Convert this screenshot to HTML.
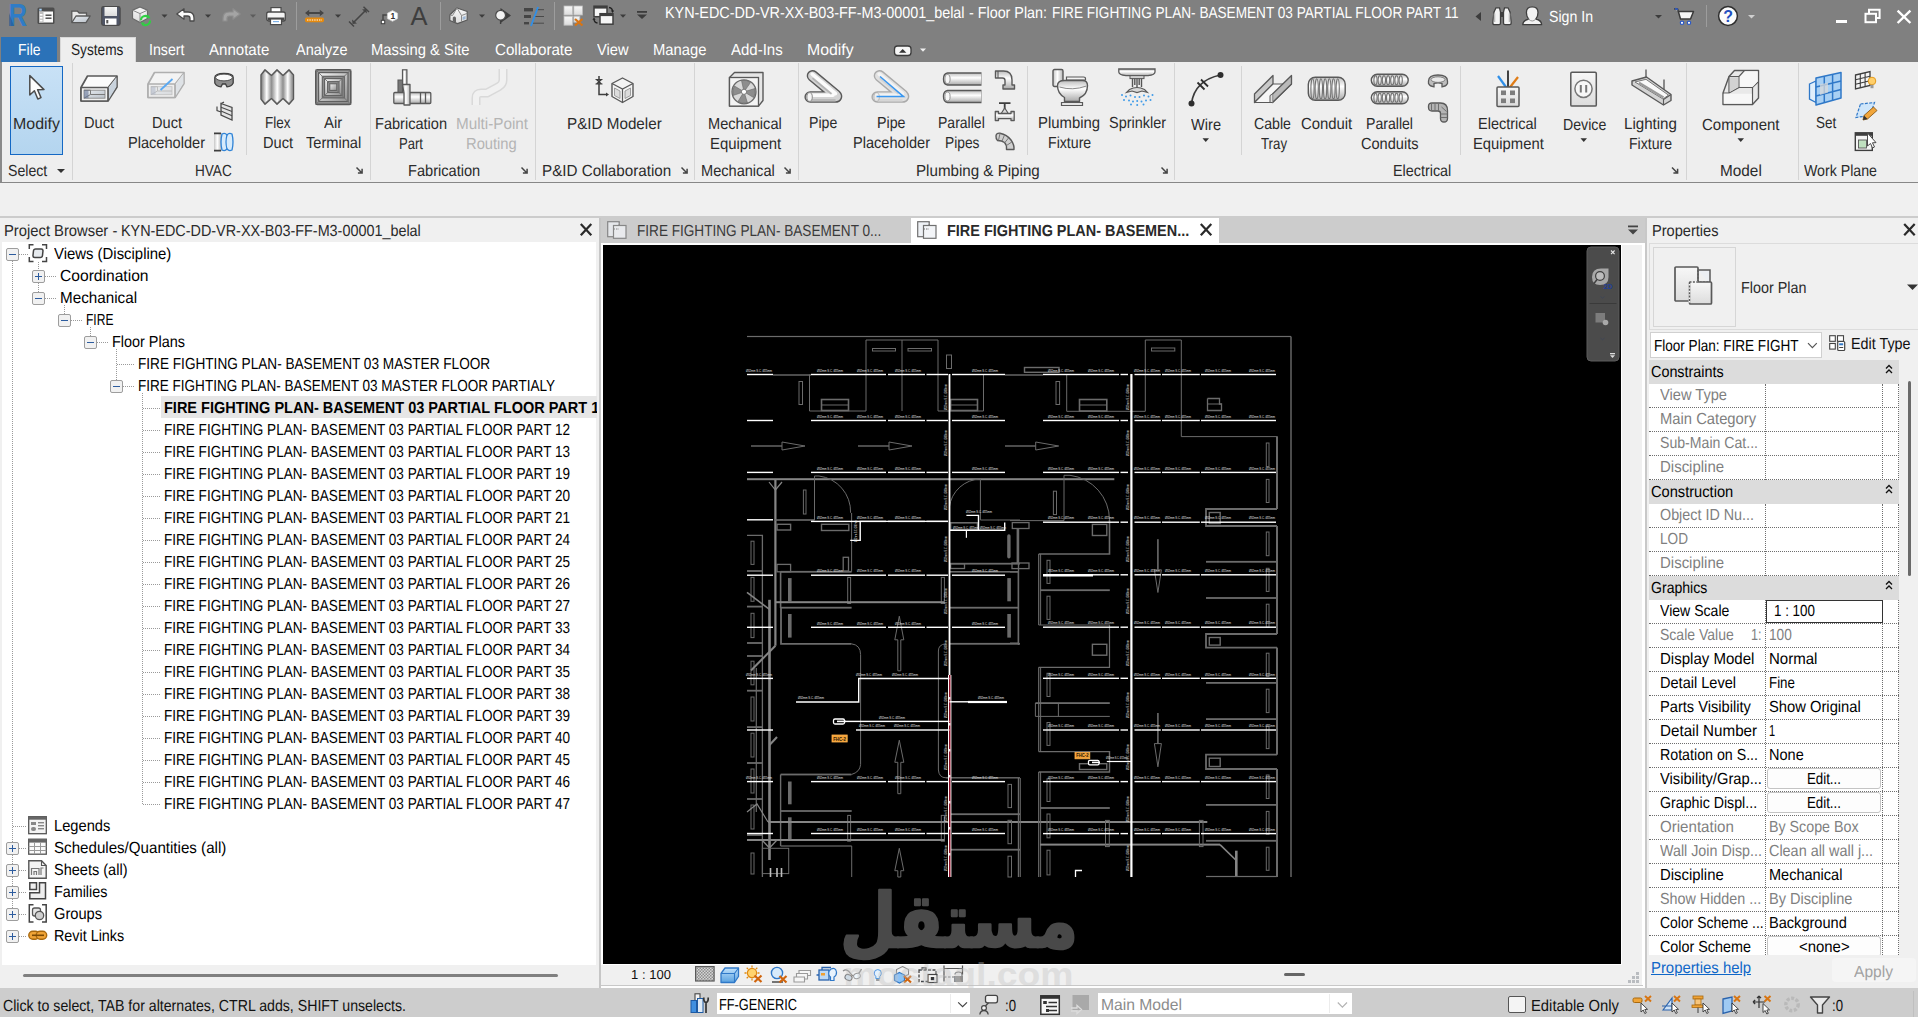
<!DOCTYPE html>
<html lang="en"><head><meta charset="utf-8"><title>Autodesk Revit</title><style>html,body{margin:0;padding:0;background:#f0f0f0;}
body{width:1918px;height:1017px;overflow:hidden;position:relative;font-family:"Liberation Sans",sans-serif;}
.t{position:absolute;white-space:pre;transform-origin:0 0;text-rendering:geometricPrecision;}
svg{overflow:visible}
</style></head><body>
<div style="position:absolute;left:0px;top:0px;width:1918px;height:1017px;background:#f0f0f0;"></div>
<div style="position:absolute;left:0px;top:0px;width:1918px;height:62px;background:#808080;"></div>
<div style="position:absolute;left:0px;top:62px;width:1918px;height:120px;background:#eeeeee;"></div>
<div style="position:absolute;left:0px;top:182px;width:1918px;height:1px;background:#878787;"></div>
<div style="position:absolute;left:0px;top:62px;width:2px;height:120px;background:#8a8a8a;"></div>
<div style="position:absolute;left:0px;top:216px;width:1918px;height:2px;background:#cccccc;"></div>
<span class="t" style="left:664.50px;top:5px;font-size:16px;line-height:17px;color:#fff;transform:scaleX(0.8983);">KYN-EDC-DD-VR-XX-B03-FF-M3-00001_belal</span>
<span class="t" style="left:969.30px;top:5px;font-size:16px;line-height:17px;color:#fff;transform:scaleX(0.8951);">- Floor Plan:</span>
<span class="t" style="left:1052.30px;top:5px;font-size:16px;line-height:17px;color:#fff;transform:scaleX(0.8502);">FIRE FIGHTING PLAN- BASEMENT 03 PARTIAL FLOOR PART 11</span>
<span class="t" style="left:1549.00px;top:9px;font-size:16px;line-height:17px;color:#fff;transform:scaleX(0.8833);">Sign In</span>
<div style="position:absolute;left:1px;top:37px;width:56px;height:25px;background:#2b72b8;"></div>
<div style="position:absolute;left:60px;top:37px;width:76px;height:25px;background:#eeeeee;border:1px solid #d8d8d8;border-bottom:none;box-sizing:border-box;"></div>
<span class="t" style="left:18.00px;top:42px;font-size:16px;line-height:17px;color:#fff;transform:scaleX(0.8727);">File</span>
<span class="t" style="left:71.30px;top:42px;font-size:16px;line-height:17px;color:#1e1e1e;transform:scaleX(0.8542);">Systems</span>
<span class="t" style="left:149.20px;top:42px;font-size:16px;line-height:17px;color:#fff;transform:scaleX(0.8872);">Insert</span>
<span class="t" style="left:209.20px;top:42px;font-size:16px;line-height:17px;color:#fff;transform:scaleX(0.9413);">Annotate</span>
<span class="t" style="left:295.50px;top:42px;font-size:16px;line-height:17px;color:#fff;transform:scaleX(0.9047);">Analyze</span>
<span class="t" style="left:371.00px;top:42px;font-size:16px;line-height:17px;color:#fff;transform:scaleX(0.9230);">Massing &amp; Site</span>
<span class="t" style="left:495.00px;top:42px;font-size:16px;line-height:17px;color:#fff;transform:scaleX(0.9471);">Collaborate</span>
<span class="t" style="left:597.00px;top:42px;font-size:16px;line-height:17px;color:#fff;transform:scaleX(0.9159);">View</span>
<span class="t" style="left:653.30px;top:42px;font-size:16px;line-height:17px;color:#fff;transform:scaleX(0.9234);">Manage</span>
<span class="t" style="left:731.00px;top:42px;font-size:16px;line-height:17px;color:#fff;transform:scaleX(0.9376);">Add-Ins</span>
<span class="t" style="left:806.70px;top:42px;font-size:16px;line-height:17px;color:#fff;transform:scaleX(0.9889);">Modify</span>
<div style="position:absolute;left:71.5px;top:63px;width:1px;height:117px;background:#d4d4d4;"></div>
<div style="position:absolute;left:369.5px;top:63px;width:1px;height:117px;background:#d4d4d4;"></div>
<div style="position:absolute;left:534.5px;top:63px;width:1px;height:117px;background:#d4d4d4;"></div>
<div style="position:absolute;left:693.5px;top:63px;width:1px;height:117px;background:#d4d4d4;"></div>
<div style="position:absolute;left:797.5px;top:63px;width:1px;height:117px;background:#d4d4d4;"></div>
<div style="position:absolute;left:1173.5px;top:63px;width:1px;height:117px;background:#d4d4d4;"></div>
<div style="position:absolute;left:1685.5px;top:63px;width:1px;height:117px;background:#d4d4d4;"></div>
<div style="position:absolute;left:1797.5px;top:63px;width:1px;height:117px;background:#d4d4d4;"></div>
<div style="position:absolute;left:246px;top:66px;width:1px;height:89px;background:#d4d4d4;"></div>
<div style="position:absolute;left:1027px;top:66px;width:1px;height:89px;background:#d4d4d4;"></div>
<div style="position:absolute;left:1241px;top:66px;width:1px;height:89px;background:#d4d4d4;"></div>
<div style="position:absolute;left:1460px;top:66px;width:1px;height:89px;background:#d4d4d4;"></div>
<div style="position:absolute;left:10px;top:66px;width:53px;height:89px;background:linear-gradient(#c8e1f6,#b4d5ef);border:1.3px solid #1468c4;box-sizing:border-box;"></div>
<span class="t" style="left:13.00px;top:116px;font-size:16px;line-height:17px;color:#2b2b2b;transform:scaleX(0.9973);">Modify</span>
<span class="t" style="left:83.75px;top:115px;font-size:16px;line-height:17px;color:#2b2b2b;transform:scaleX(0.9117);">Duct</span>
<span class="t" style="left:151.75px;top:115px;font-size:16px;line-height:17px;color:#2b2b2b;transform:scaleX(0.9117);">Duct</span>
<span class="t" style="left:127.50px;top:135px;font-size:16px;line-height:17px;color:#2b2b2b;transform:scaleX(0.9112);">Placeholder</span>
<span class="t" style="left:265.00px;top:115px;font-size:16px;line-height:17px;color:#2b2b2b;transform:scaleX(0.8434);">Flex</span>
<span class="t" style="left:262.50px;top:135px;font-size:16px;line-height:17px;color:#2b2b2b;transform:scaleX(0.9117);">Duct</span>
<span class="t" style="left:324.25px;top:115px;font-size:16px;line-height:17px;color:#2b2b2b;transform:scaleX(0.9329);">Air</span>
<span class="t" style="left:305.50px;top:135px;font-size:16px;line-height:17px;color:#2b2b2b;transform:scaleX(0.9137);">Terminal</span>
<span class="t" style="left:375.00px;top:116px;font-size:16px;line-height:17px;color:#2b2b2b;transform:scaleX(0.9096);">Fabrication</span>
<span class="t" style="left:399.25px;top:136px;font-size:16px;line-height:17px;color:#2b2b2b;transform:scaleX(0.8179);">Part</span>
<span class="t" style="left:455.50px;top:116px;font-size:16px;line-height:17px;color:#b4b4b4;transform:scaleX(0.9527);">Multi-Point</span>
<span class="t" style="left:466.25px;top:136px;font-size:16px;line-height:17px;color:#b4b4b4;transform:scaleX(0.9201);">Routing</span>
<span class="t" style="left:567.00px;top:116px;font-size:16px;line-height:17px;color:#2b2b2b;transform:scaleX(0.9514);">P&amp;ID Modeler</span>
<span class="t" style="left:708.25px;top:116px;font-size:16px;line-height:17px;color:#2b2b2b;transform:scaleX(0.9112);">Mechanical</span>
<span class="t" style="left:710.00px;top:136px;font-size:16px;line-height:17px;color:#2b2b2b;transform:scaleX(0.9314);">Equipment</span>
<span class="t" style="left:809.25px;top:115px;font-size:16px;line-height:17px;color:#2b2b2b;transform:scaleX(0.8820);">Pipe</span>
<span class="t" style="left:877.00px;top:115px;font-size:16px;line-height:17px;color:#2b2b2b;transform:scaleX(0.8898);">Pipe</span>
<span class="t" style="left:852.50px;top:135px;font-size:16px;line-height:17px;color:#2b2b2b;transform:scaleX(0.9112);">Placeholder</span>
<span class="t" style="left:938.25px;top:115px;font-size:16px;line-height:17px;color:#2b2b2b;transform:scaleX(0.8761);">Parallel</span>
<span class="t" style="left:945.00px;top:135px;font-size:16px;line-height:17px;color:#2b2b2b;transform:scaleX(0.8618);">Pipes</span>
<span class="t" style="left:1038.00px;top:115px;font-size:16px;line-height:17px;color:#2b2b2b;transform:scaleX(0.9295);">Plumbing</span>
<span class="t" style="left:1048.00px;top:135px;font-size:16px;line-height:17px;color:#2b2b2b;transform:scaleX(0.8843);">Fixture</span>
<span class="t" style="left:1109.25px;top:115px;font-size:16px;line-height:17px;color:#2b2b2b;transform:scaleX(0.9027);">Sprinkler</span>
<span class="t" style="left:1191.25px;top:117px;font-size:16px;line-height:17px;color:#2b2b2b;transform:scaleX(0.9121);">Wire</span>
<span class="t" style="left:1254.25px;top:116px;font-size:16px;line-height:17px;color:#2b2b2b;transform:scaleX(0.8849);">Cable</span>
<span class="t" style="left:1260.75px;top:136px;font-size:16px;line-height:17px;color:#2b2b2b;transform:scaleX(0.8279);">Tray</span>
<span class="t" style="left:1301.25px;top:116px;font-size:16px;line-height:17px;color:#2b2b2b;transform:scaleX(0.9292);">Conduit</span>
<span class="t" style="left:1366.25px;top:116px;font-size:16px;line-height:17px;color:#2b2b2b;transform:scaleX(0.8808);">Parallel</span>
<span class="t" style="left:1361.25px;top:136px;font-size:16px;line-height:17px;color:#2b2b2b;transform:scaleX(0.9104);">Conduits</span>
<span class="t" style="left:1478.25px;top:116px;font-size:16px;line-height:17px;color:#2b2b2b;transform:scaleX(0.9052);">Electrical</span>
<span class="t" style="left:1472.50px;top:136px;font-size:16px;line-height:17px;color:#2b2b2b;transform:scaleX(0.9248);">Equipment</span>
<span class="t" style="left:1562.50px;top:117px;font-size:16px;line-height:17px;color:#2b2b2b;transform:scaleX(0.8843);">Device</span>
<span class="t" style="left:1624.40px;top:116px;font-size:16px;line-height:17px;color:#2b2b2b;transform:scaleX(0.9439);">Lighting</span>
<span class="t" style="left:1629.40px;top:136px;font-size:16px;line-height:17px;color:#2b2b2b;transform:scaleX(0.8813);">Fixture</span>
<span class="t" style="left:1702.20px;top:117px;font-size:16px;line-height:17px;color:#2b2b2b;transform:scaleX(0.9369);">Component</span>
<span class="t" style="left:1815.60px;top:115px;font-size:16px;line-height:17px;color:#2b2b2b;transform:scaleX(0.8411);">Set</span>
<span class="t" style="left:8.25px;top:163px;font-size:16px;line-height:17px;color:#2b2b2b;transform:scaleX(0.8826);">Select</span>
<span class="t" style="left:194.50px;top:163px;font-size:16px;line-height:17px;color:#2b2b2b;transform:scaleX(0.8494);">HVAC</span>
<span class="t" style="left:408.25px;top:163px;font-size:16px;line-height:17px;color:#2b2b2b;transform:scaleX(0.9128);">Fabrication</span>
<span class="t" style="left:542.00px;top:163px;font-size:16px;line-height:17px;color:#2b2b2b;transform:scaleX(0.9498);">P&amp;ID Collaboration</span>
<span class="t" style="left:701.25px;top:163px;font-size:16px;line-height:17px;color:#2b2b2b;transform:scaleX(0.9112);">Mechanical</span>
<span class="t" style="left:916.25px;top:163px;font-size:16px;line-height:17px;color:#2b2b2b;transform:scaleX(0.9465);">Plumbing &amp; Piping</span>
<span class="t" style="left:1392.50px;top:163px;font-size:16px;line-height:17px;color:#2b2b2b;transform:scaleX(0.8974);">Electrical</span>
<span class="t" style="left:1720.40px;top:163px;font-size:16px;line-height:17px;color:#2b2b2b;transform:scaleX(0.9592);">Model</span>
<span class="t" style="left:1804.40px;top:163px;font-size:16px;line-height:17px;color:#2b2b2b;transform:scaleX(0.8859);">Work Plane</span>
<div style="position:absolute;left:0px;top:218px;width:599px;height:770px;background:#f0f0f0;"></div>
<div style="position:absolute;left:2px;top:242px;width:594px;height:723px;background:#fff;"></div>
<div style="position:absolute;left:599.2px;top:218px;width:1.8px;height:770px;background:#c6c6c6;"></div>
<span class="t" style="left:4.00px;top:223px;font-size:16px;line-height:17px;color:#2a2a2a;transform:scaleX(0.9234);">Project Browser -</span>
<span class="t" style="left:121.20px;top:223px;font-size:16px;line-height:17px;color:#2a2a2a;transform:scaleX(0.8992);">KYN-EDC-DD-VR-XX-B03-FF-M3-00001_belal</span>
<span class="t" style="left:54.00px;top:246px;font-size:16px;line-height:17px;color:#000;transform:scaleX(0.9312);">Views (Discipline)</span>
<span class="t" style="left:59.80px;top:268px;font-size:16px;line-height:17px;color:#000;transform:scaleX(0.9754);">Coordination</span>
<span class="t" style="left:60.20px;top:290px;font-size:16px;line-height:17px;color:#000;transform:scaleX(0.9526);">Mechanical</span>
<span class="t" style="left:86.25px;top:312px;font-size:16px;line-height:17px;color:#000;transform:scaleX(0.7530);">FIRE</span>
<span class="t" style="left:112.00px;top:334px;font-size:16px;line-height:17px;color:#000;transform:scaleX(0.9009);">Floor Plans</span>
<span class="t" style="left:138.00px;top:356px;font-size:16px;line-height:17px;color:#000;transform:scaleX(0.8507);">FIRE FIGHTING PLAN- BASEMENT 03 MASTER FLOOR</span>
<span class="t" style="left:138.00px;top:378px;font-size:16px;line-height:17px;color:#000;transform:scaleX(0.8456);">FIRE FIGHTING PLAN- BASEMENT 03 MASTER FLOOR PARTIALY</span>
<div style="position:absolute;left:161px;top:396px;width:436px;height:21.6px;background:#e6e6e6;"></div>
<div style="position:absolute;left:161px;top:396px;width:436px;height:21.6px;overflow:hidden">
<span class="t" style="left:3.00px;top:4px;font-size:16px;line-height:17px;color:#000;font-weight:700;transform:scaleX(0.9067);">FIRE FIGHTING PLAN- BASEMENT 03 PARTIAL FLOOR PART 11</span>
</div>
<span class="t" style="left:164.00px;top:422px;font-size:16px;line-height:17px;color:#000;transform:scaleX(0.8467);">FIRE FIGHTING PLAN- BASEMENT 03 PARTIAL FLOOR PART 12</span>
<span class="t" style="left:164.00px;top:444px;font-size:16px;line-height:17px;color:#000;transform:scaleX(0.8467);">FIRE FIGHTING PLAN- BASEMENT 03 PARTIAL FLOOR PART 13</span>
<span class="t" style="left:164.00px;top:466px;font-size:16px;line-height:17px;color:#000;transform:scaleX(0.8467);">FIRE FIGHTING PLAN- BASEMENT 03 PARTIAL FLOOR PART 19</span>
<span class="t" style="left:164.00px;top:488px;font-size:16px;line-height:17px;color:#000;transform:scaleX(0.8467);">FIRE FIGHTING PLAN- BASEMENT 03 PARTIAL FLOOR PART 20</span>
<span class="t" style="left:164.00px;top:510px;font-size:16px;line-height:17px;color:#000;transform:scaleX(0.8467);">FIRE FIGHTING PLAN- BASEMENT 03 PARTIAL FLOOR PART 21</span>
<span class="t" style="left:164.00px;top:532px;font-size:16px;line-height:17px;color:#000;transform:scaleX(0.8467);">FIRE FIGHTING PLAN- BASEMENT 03 PARTIAL FLOOR PART 24</span>
<span class="t" style="left:164.00px;top:554px;font-size:16px;line-height:17px;color:#000;transform:scaleX(0.8467);">FIRE FIGHTING PLAN- BASEMENT 03 PARTIAL FLOOR PART 25</span>
<span class="t" style="left:164.00px;top:576px;font-size:16px;line-height:17px;color:#000;transform:scaleX(0.8467);">FIRE FIGHTING PLAN- BASEMENT 03 PARTIAL FLOOR PART 26</span>
<span class="t" style="left:164.00px;top:598px;font-size:16px;line-height:17px;color:#000;transform:scaleX(0.8467);">FIRE FIGHTING PLAN- BASEMENT 03 PARTIAL FLOOR PART 27</span>
<span class="t" style="left:164.00px;top:620px;font-size:16px;line-height:17px;color:#000;transform:scaleX(0.8467);">FIRE FIGHTING PLAN- BASEMENT 03 PARTIAL FLOOR PART 33</span>
<span class="t" style="left:164.00px;top:642px;font-size:16px;line-height:17px;color:#000;transform:scaleX(0.8467);">FIRE FIGHTING PLAN- BASEMENT 03 PARTIAL FLOOR PART 34</span>
<span class="t" style="left:164.00px;top:664px;font-size:16px;line-height:17px;color:#000;transform:scaleX(0.8467);">FIRE FIGHTING PLAN- BASEMENT 03 PARTIAL FLOOR PART 35</span>
<span class="t" style="left:164.00px;top:686px;font-size:16px;line-height:17px;color:#000;transform:scaleX(0.8467);">FIRE FIGHTING PLAN- BASEMENT 03 PARTIAL FLOOR PART 38</span>
<span class="t" style="left:164.00px;top:708px;font-size:16px;line-height:17px;color:#000;transform:scaleX(0.8467);">FIRE FIGHTING PLAN- BASEMENT 03 PARTIAL FLOOR PART 39</span>
<span class="t" style="left:164.00px;top:730px;font-size:16px;line-height:17px;color:#000;transform:scaleX(0.8467);">FIRE FIGHTING PLAN- BASEMENT 03 PARTIAL FLOOR PART 40</span>
<span class="t" style="left:164.00px;top:752px;font-size:16px;line-height:17px;color:#000;transform:scaleX(0.8467);">FIRE FIGHTING PLAN- BASEMENT 03 PARTIAL FLOOR PART 45</span>
<span class="t" style="left:164.00px;top:774px;font-size:16px;line-height:17px;color:#000;transform:scaleX(0.8467);">FIRE FIGHTING PLAN- BASEMENT 03 PARTIAL FLOOR PART 46</span>
<span class="t" style="left:164.00px;top:796px;font-size:16px;line-height:17px;color:#000;transform:scaleX(0.8467);">FIRE FIGHTING PLAN- BASEMENT 03 PARTIAL FLOOR PART 47</span>
<span class="t" style="left:54.00px;top:818px;font-size:16px;line-height:17px;color:#000;transform:scaleX(0.9171);">Legends</span>
<span class="t" style="left:54.00px;top:840px;font-size:16px;line-height:17px;color:#000;transform:scaleX(0.9451);">Schedules/Quantities (all)</span>
<span class="t" style="left:54.00px;top:862px;font-size:16px;line-height:17px;color:#000;transform:scaleX(0.9083);">Sheets (all)</span>
<span class="t" style="left:54.00px;top:884px;font-size:16px;line-height:17px;color:#000;transform:scaleX(0.8965);">Families</span>
<span class="t" style="left:54.00px;top:906px;font-size:16px;line-height:17px;color:#000;transform:scaleX(0.9167);">Groups</span>
<span class="t" style="left:54.00px;top:928px;font-size:16px;line-height:17px;color:#000;transform:scaleX(0.8971);">Revit Links</span>
<div style="position:absolute;left:23px;top:974px;width:535px;height:3px;background:#808080;border-radius:2px;"></div>
<div style="position:absolute;left:0px;top:988px;width:1918px;height:29px;background:#cdcdcd;"></div>
<div style="position:absolute;left:1913px;top:991px;width:1px;height:26px;background:#bfbfbf;"></div>
<span class="t" style="left:3.00px;top:998px;font-size:16px;line-height:17px;color:#111;transform:scaleX(0.8846);">Click to select, TAB for alternates, CTRL adds, SHIFT unselects.</span>
<div style="position:absolute;left:717px;top:993px;width:253px;height:21px;background:#fff;"></div>
<span class="t" style="left:719.00px;top:997px;font-size:16px;line-height:17px;color:#000;transform:scaleX(0.7977);">FF-GENERIC</span>
<span class="t" style="left:1005.00px;top:998px;font-size:16px;line-height:17px;color:#111;transform:scaleX(0.8244);">:0</span>
<div style="position:absolute;left:1098px;top:993px;width:254px;height:21px;background:#fff;"></div>
<span class="t" style="left:1101.00px;top:997px;font-size:16px;line-height:17px;color:#8c8c8c;transform:scaleX(0.9794);">Main Model</span>
<div style="position:absolute;left:1508px;top:996px;width:18px;height:17px;background:#f4f4f4;border:1px solid #555;box-sizing:border-box;border-radius:2px;"></div>
<span class="t" style="left:1530.50px;top:998px;font-size:16px;line-height:17px;color:#111;transform:scaleX(0.9246);">Editable Only</span>
<span class="t" style="left:1832.00px;top:998px;font-size:16px;line-height:17px;color:#111;transform:scaleX(0.8244);">:0</span>
<div style="position:absolute;left:601px;top:218px;width:1044px;height:25px;background:#cccccc;"></div>
<div style="position:absolute;left:601px;top:242.5px;width:1044px;height:2.5px;background:#fff;"></div>
<div style="position:absolute;left:601px;top:245px;width:2px;height:743px;background:#fff;"></div>
<div style="position:absolute;left:603px;top:245px;width:1018px;height:719px;background:#000;"></div>
<div style="position:absolute;left:1621px;top:245px;width:1.3px;height:719px;background:#fff;"></div>
<div style="position:absolute;left:1622.3px;top:245px;width:19.7px;height:719px;background:#f0f0f0;"></div>
<div style="position:absolute;left:1642px;top:245px;width:3px;height:743px;background:#fff;"></div>
<div style="position:absolute;left:911px;top:218px;width:308px;height:27px;background:#fff;"></div>
<span class="t" style="left:636.60px;top:223px;font-size:16px;line-height:17px;color:#3a3a3a;transform:scaleX(0.8493);">FIRE FIGHTING PLAN- BASEMENT 0...</span>
<span class="t" style="left:946.80px;top:223px;font-size:16px;line-height:17px;color:#2a2a2a;font-weight:700;transform:scaleX(0.9022);">FIRE FIGHTING PLAN- BASEMEN...</span>
<div style="position:absolute;left:601px;top:964px;width:1041px;height:22px;background:#f0f0f0;"></div>
<div style="position:absolute;left:601px;top:964px;width:1021px;height:1px;background:#fff;"></div>
<div style="position:absolute;left:601px;top:985px;width:1042px;height:1px;background:#c8c8c8;"></div>
<div style="position:absolute;left:601px;top:986px;width:1044px;height:2px;background:#fdfdfd;"></div>
<span class="t" style="left:630.50px;top:966px;font-size:13px;line-height:17px;color:#111;transform:scaleX(1.0034);">1 : 100</span>
<div style="position:absolute;left:1284px;top:973px;width:21px;height:3px;background:#666;border-radius:2px;"></div>
<div style="position:absolute;left:1645px;top:218px;width:2px;height:770px;background:#c8c8c8;"></div>
<div style="position:absolute;left:1647px;top:218px;width:271px;height:770px;background:#f0f0f0;"></div>
<span class="t" style="left:1651.50px;top:223px;font-size:16px;line-height:17px;color:#2a2a2a;transform:scaleX(0.9119);">Properties</span>
<div style="position:absolute;left:1649px;top:243px;width:269px;height:87px;background:#f0f0f0;border:1px solid #dcdcdc;box-sizing:border-box;border-right:none;"></div>
<div style="position:absolute;left:1653px;top:247px;width:83px;height:80px;background:#f0f0f0;border:1px solid #d6d6d6;box-sizing:border-box;"></div>
<span class="t" style="left:1740.60px;top:280px;font-size:16px;line-height:17px;color:#2a2a2a;transform:scaleX(0.8969);">Floor Plan</span>
<div style="position:absolute;left:1650px;top:332px;width:172px;height:26px;background:#fff;border:1px solid #d0d0d0;box-sizing:border-box;"></div>
<span class="t" style="left:1653.50px;top:338px;font-size:16px;line-height:17px;color:#000;transform:scaleX(0.8465);">Floor Plan: FIRE FIGHT</span>
<span class="t" style="left:1850.50px;top:336px;font-size:16px;line-height:17px;color:#111;transform:scaleX(0.8958);">Edit Type</span>
<div style="position:absolute;left:1649px;top:360px;width:250px;height:595px;background:#fff;"></div>
<div style="position:absolute;left:1649px;top:360px;width:250px;height:24px;background:#dcdcdc;"></div>
<span class="t" style="left:1651.40px;top:364px;font-size:16px;line-height:17px;color:#000;transform:scaleX(0.8984);">Constraints</span>
<svg style="position:absolute;left:1885px;top:364px" width="8" height="11" viewBox="0 0 8 11"><path d="M1 4.5 L4 1.5 L7 4.5 M1 9 L4 6 L7 9" fill="none" stroke="#111" stroke-width="1.3"/></svg>
<div style="position:absolute;left:1649px;top:480px;width:250px;height:24px;background:#dcdcdc;"></div>
<span class="t" style="left:1651.40px;top:484px;font-size:16px;line-height:17px;color:#000;transform:scaleX(0.9151);">Construction</span>
<svg style="position:absolute;left:1885px;top:484px" width="8" height="11" viewBox="0 0 8 11"><path d="M1 4.5 L4 1.5 L7 4.5 M1 9 L4 6 L7 9" fill="none" stroke="#111" stroke-width="1.3"/></svg>
<div style="position:absolute;left:1649px;top:576px;width:250px;height:24px;background:#dcdcdc;"></div>
<span class="t" style="left:1651.40px;top:580px;font-size:16px;line-height:17px;color:#000;transform:scaleX(0.8793);">Graphics</span>
<svg style="position:absolute;left:1885px;top:580px" width="8" height="11" viewBox="0 0 8 11"><path d="M1 4.5 L4 1.5 L7 4.5 M1 9 L4 6 L7 9" fill="none" stroke="#111" stroke-width="1.3"/></svg>
<div style="position:absolute;left:1649px;top:407px;width:250px;height:0;border-top:1px dotted #6e6e6e"></div>
<div style="position:absolute;left:1649px;top:431px;width:250px;height:0;border-top:1px dotted #6e6e6e"></div>
<div style="position:absolute;left:1649px;top:455px;width:250px;height:0;border-top:1px dotted #6e6e6e"></div>
<div style="position:absolute;left:1649px;top:479px;width:250px;height:0;border-top:1px dotted #6e6e6e"></div>
<div style="position:absolute;left:1649px;top:527px;width:250px;height:0;border-top:1px dotted #6e6e6e"></div>
<div style="position:absolute;left:1649px;top:551px;width:250px;height:0;border-top:1px dotted #6e6e6e"></div>
<div style="position:absolute;left:1649px;top:575px;width:250px;height:0;border-top:1px dotted #6e6e6e"></div>
<div style="position:absolute;left:1649px;top:623px;width:250px;height:0;border-top:1px dotted #6e6e6e"></div>
<div style="position:absolute;left:1649px;top:647px;width:250px;height:0;border-top:1px dotted #6e6e6e"></div>
<div style="position:absolute;left:1649px;top:671px;width:250px;height:0;border-top:1px dotted #6e6e6e"></div>
<div style="position:absolute;left:1649px;top:695px;width:250px;height:0;border-top:1px dotted #6e6e6e"></div>
<div style="position:absolute;left:1649px;top:719px;width:250px;height:0;border-top:1px dotted #6e6e6e"></div>
<div style="position:absolute;left:1649px;top:743px;width:250px;height:0;border-top:1px dotted #6e6e6e"></div>
<div style="position:absolute;left:1649px;top:767px;width:250px;height:0;border-top:1px dotted #6e6e6e"></div>
<div style="position:absolute;left:1649px;top:791px;width:250px;height:0;border-top:1px dotted #6e6e6e"></div>
<div style="position:absolute;left:1649px;top:815px;width:250px;height:0;border-top:1px dotted #6e6e6e"></div>
<div style="position:absolute;left:1649px;top:839px;width:250px;height:0;border-top:1px dotted #6e6e6e"></div>
<div style="position:absolute;left:1649px;top:863px;width:250px;height:0;border-top:1px dotted #6e6e6e"></div>
<div style="position:absolute;left:1649px;top:887px;width:250px;height:0;border-top:1px dotted #6e6e6e"></div>
<div style="position:absolute;left:1649px;top:911px;width:250px;height:0;border-top:1px dotted #6e6e6e"></div>
<div style="position:absolute;left:1649px;top:935px;width:250px;height:0;border-top:1px dotted #6e6e6e"></div>
<div style="position:absolute;left:1765px;top:384px;width:0;height:96px;border-left:1px dotted #6e6e6e"></div>
<div style="position:absolute;left:1882px;top:384px;width:0;height:96px;border-left:1px dotted #6e6e6e"></div>
<div style="position:absolute;left:1898px;top:384px;width:0;height:96px;border-left:1px dotted #6e6e6e"></div>
<div style="position:absolute;left:1765px;top:504px;width:0;height:72px;border-left:1px dotted #6e6e6e"></div>
<div style="position:absolute;left:1882px;top:504px;width:0;height:72px;border-left:1px dotted #6e6e6e"></div>
<div style="position:absolute;left:1898px;top:504px;width:0;height:72px;border-left:1px dotted #6e6e6e"></div>
<div style="position:absolute;left:1765px;top:600px;width:0;height:355px;border-left:1px dotted #6e6e6e"></div>
<div style="position:absolute;left:1882px;top:600px;width:0;height:355px;border-left:1px dotted #6e6e6e"></div>
<div style="position:absolute;left:1898px;top:600px;width:0;height:355px;border-left:1px dotted #6e6e6e"></div>
<span class="t" style="left:1659.60px;top:387px;font-size:16px;line-height:17px;color:#7f7f7f;transform:scaleX(0.9149);">View Type</span>
<span class="t" style="left:1659.60px;top:411px;font-size:16px;line-height:17px;color:#7f7f7f;transform:scaleX(0.9236);">Main Category</span>
<span class="t" style="left:1659.60px;top:435px;font-size:16px;line-height:17px;color:#7f7f7f;transform:scaleX(0.8816);">Sub-Main Cat...</span>
<span class="t" style="left:1659.60px;top:459px;font-size:16px;line-height:17px;color:#7f7f7f;transform:scaleX(0.9362);">Discipline</span>
<span class="t" style="left:1659.60px;top:507px;font-size:16px;line-height:17px;color:#7f7f7f;transform:scaleX(0.8959);">Object ID Nu...</span>
<span class="t" style="left:1659.60px;top:531px;font-size:16px;line-height:17px;color:#7f7f7f;transform:scaleX(0.8509);">LOD</span>
<span class="t" style="left:1659.60px;top:555px;font-size:16px;line-height:17px;color:#7f7f7f;transform:scaleX(0.9362);">Discipline</span>
<div style="position:absolute;left:1766px;top:600px;width:117px;height:23px;background:#fff;border:1px solid #333;box-sizing:border-box;"></div>
<div style="position:absolute;left:1767px;top:768px;width:114px;height:21px;background:#fdfdfd;border:1px solid #c4c4c4;box-sizing:border-box;border-radius:3px;"></div>
<div style="position:absolute;left:1767px;top:792px;width:114px;height:21px;background:#fdfdfd;border:1px solid #c4c4c4;box-sizing:border-box;border-radius:3px;"></div>
<div style="position:absolute;left:1767px;top:936px;width:114px;height:21px;background:#fdfdfd;border:1px solid #c4c4c4;box-sizing:border-box;border-radius:3px;"></div>
<span class="t" style="left:1659.60px;top:603px;font-size:16px;line-height:17px;color:#000;transform:scaleX(0.8800);">View Scale</span>
<span class="t" style="left:1659.60px;top:627px;font-size:16px;line-height:17px;color:#7f7f7f;transform:scaleX(0.8765);">Scale Value</span>
<span class="t" style="left:1768.60px;top:627px;font-size:16px;line-height:17px;color:#7f7f7f;transform:scaleX(0.8538);">100</span>
<span class="t" style="left:1659.60px;top:651px;font-size:16px;line-height:17px;color:#000;transform:scaleX(0.9394);">Display Model</span>
<span class="t" style="left:1768.60px;top:651px;font-size:16px;line-height:17px;color:#000;transform:scaleX(0.9387);">Normal</span>
<span class="t" style="left:1659.60px;top:675px;font-size:16px;line-height:17px;color:#000;transform:scaleX(0.9090);">Detail Level</span>
<span class="t" style="left:1768.60px;top:675px;font-size:16px;line-height:17px;color:#000;transform:scaleX(0.8321);">Fine</span>
<span class="t" style="left:1659.60px;top:699px;font-size:16px;line-height:17px;color:#000;transform:scaleX(0.9154);">Parts Visibility</span>
<span class="t" style="left:1768.60px;top:699px;font-size:16px;line-height:17px;color:#000;transform:scaleX(0.9216);">Show Original</span>
<span class="t" style="left:1659.60px;top:723px;font-size:16px;line-height:17px;color:#000;transform:scaleX(0.9495);">Detail Number</span>
<span class="t" style="left:1768.60px;top:723px;font-size:16px;line-height:17px;color:#000;transform:scaleX(0.6849);">1</span>
<span class="t" style="left:1659.60px;top:747px;font-size:16px;line-height:17px;color:#000;transform:scaleX(0.8885);">Rotation on S...</span>
<span class="t" style="left:1768.60px;top:747px;font-size:16px;line-height:17px;color:#000;transform:scaleX(0.9072);">None</span>
<span class="t" style="left:1659.60px;top:771px;font-size:16px;line-height:17px;color:#000;transform:scaleX(0.9192);">Visibility/Grap...</span>
<span class="t" style="left:1659.60px;top:795px;font-size:16px;line-height:17px;color:#000;transform:scaleX(0.8878);">Graphic Displ...</span>
<span class="t" style="left:1659.60px;top:819px;font-size:16px;line-height:17px;color:#7f7f7f;transform:scaleX(0.9429);">Orientation</span>
<span class="t" style="left:1768.60px;top:819px;font-size:16px;line-height:17px;color:#7f7f7f;transform:scaleX(0.8915);">By Scope Box</span>
<span class="t" style="left:1659.60px;top:843px;font-size:16px;line-height:17px;color:#7f7f7f;transform:scaleX(0.8930);">Wall Join Disp...</span>
<span class="t" style="left:1768.60px;top:843px;font-size:16px;line-height:17px;color:#7f7f7f;transform:scaleX(0.9004);">Clean all wall j...</span>
<span class="t" style="left:1659.60px;top:867px;font-size:16px;line-height:17px;color:#000;transform:scaleX(0.9304);">Discipline</span>
<span class="t" style="left:1768.60px;top:867px;font-size:16px;line-height:17px;color:#000;transform:scaleX(0.9069);">Mechanical</span>
<span class="t" style="left:1659.60px;top:891px;font-size:16px;line-height:17px;color:#7f7f7f;transform:scaleX(0.8951);">Show Hidden ...</span>
<span class="t" style="left:1768.60px;top:891px;font-size:16px;line-height:17px;color:#7f7f7f;transform:scaleX(0.9105);">By Discipline</span>
<span class="t" style="left:1659.60px;top:915px;font-size:16px;line-height:17px;color:#000;transform:scaleX(0.8703);">Color Scheme ...</span>
<span class="t" style="left:1768.60px;top:915px;font-size:16px;line-height:17px;color:#000;transform:scaleX(0.9111);">Background</span>
<span class="t" style="left:1659.60px;top:939px;font-size:16px;line-height:17px;color:#000;transform:scaleX(0.8967);">Color Scheme</span>
<span class="t" style="left:1751.00px;top:627px;font-size:16px;line-height:17px;color:#7f7f7f;transform:scaleX(0.7869);">1:</span>
<span class="t" style="left:1773.80px;top:603px;font-size:16px;line-height:17px;color:#000;transform:scaleX(0.8358);">1 : 100</span>
<span class="t" style="left:1806.80px;top:771px;font-size:16px;line-height:17px;color:#000;transform:scaleX(0.8287);">Edit...</span>
<span class="t" style="left:1806.80px;top:795px;font-size:16px;line-height:17px;color:#000;transform:scaleX(0.8287);">Edit...</span>
<span class="t" style="left:1798.90px;top:939px;font-size:16px;line-height:17px;color:#000;transform:scaleX(0.9322);">&lt;none&gt;</span>
<div style="position:absolute;left:1647px;top:955px;width:271px;height:33px;background:#f0f0f0;"></div>
<div style="position:absolute;left:1908px;top:381px;width:3px;height:195px;background:#6a6a6a;border-radius:2px;"></div>
<span class="t" style="left:1651.00px;top:960px;font-size:16px;line-height:17px;color:#0f67c8;transform:scaleX(0.9292);text-decoration:underline;">Properties help</span>
<div style="position:absolute;left:1832px;top:958px;width:84px;height:24px;background:#f5f5f5;border-radius:4px;"></div>
<span class="t" style="left:1853.50px;top:964px;font-size:16px;line-height:17px;color:#a2a2a2;transform:scaleX(0.9742);">Apply</span>
<svg style="position:absolute;left:0;top:0" width="1918" height="1017" viewBox="0 0 1918 1017" font-family="Liberation Sans, sans-serif" shape-rendering="geometricPrecision"><rect x="747.0" y="335.9" width="544.0" height="1.2" fill="#6b6b6b"/><rect x="1290.3" y="336.5" width="1.4" height="540.5" fill="#6b6b6b"/><polyline points="809.5,374.5 809.5,411.0 866.0,411.0" fill="none" stroke="#6b6b6b" stroke-width="1" /><polyline points="866.0,411.0 866.0,340.0 938.0,340.0 938.0,411.0 983.5,411.0 983.5,374.5" fill="none" stroke="#6b6b6b" stroke-width="1" /><rect x="901.5" y="340.0" width="1" height="71.0" fill="#6b6b6b"/><rect x="773.0" y="374.3" width="38.0" height="1.4" fill="#6b6b6b"/><rect x="872.5" y="348.5" width="23.0" height="2.5" fill="none" stroke="#6b6b6b" stroke-width="1"/><rect x="908.0" y="348.5" width="23.5" height="2.5" fill="none" stroke="#6b6b6b" stroke-width="1"/><rect x="946.5" y="355.0" width="5.0" height="13.5" fill="none" stroke="#6b6b6b" stroke-width="1"/><rect x="799.0" y="381.5" width="3.5" height="23.0" fill="none" stroke="#6b6b6b" stroke-width="1"/><rect x="821.5" y="399.5" width="27.0" height="11.0" fill="none" stroke="#6b6b6b" stroke-width="1.6"/><rect x="821.5" y="404.5" width="27.0" height="1" fill="#6b6b6b"/><rect x="950.6" y="399.5" width="26.9" height="11.0" fill="none" stroke="#6b6b6b" stroke-width="1.6"/><rect x="950.6" y="404.5" width="26.9" height="1" fill="#6b6b6b"/><rect x="1005.0" y="374.3" width="38.0" height="1.4" fill="#6b6b6b"/><polyline points="1066.7,374.5 1066.7,411.3 1145.3,411.3 1145.3,340.0 1181.3,340.0 1181.3,436.6 1277.6,436.6" fill="none" stroke="#6b6b6b" stroke-width="1" /><rect x="1276.0" y="436.6" width="2" height="72.4" fill="#6b6b6b"/><rect x="1151.5" y="348.0" width="23.3" height="3.0" fill="none" stroke="#6b6b6b" stroke-width="1"/><rect x="1024.5" y="367.5" width="34.5" height="4.8" fill="none" stroke="#6b6b6b" stroke-width="1.4"/><rect x="1056.0" y="381.5" width="3.6" height="23.0" fill="none" stroke="#6b6b6b" stroke-width="1"/><rect x="1079.5" y="399.5" width="27.3" height="11.5" fill="none" stroke="#6b6b6b" stroke-width="1.6"/><rect x="1079.5" y="404.5" width="27.3" height="1" fill="#6b6b6b"/><polyline points="1207.5,398.5 1219.5,398.5 1219.5,404.0 1221.5,404.0 1221.5,410.5 1207.5,410.5 1207.5,398.5" fill="none" stroke="#6b6b6b" stroke-width="1.3" /><rect x="1207.5" y="403.5" width="14.0" height="1" fill="#6b6b6b"/><rect x="1266.3" y="443.0" width="2.7" height="23.5" fill="none" stroke="#6b6b6b" stroke-width="1"/><rect x="751.0" y="445.3" width="31.0" height="1.4" fill="#6b6b6b"/><polyline points="782.0,442.0 805.0,446.0 782.0,450.0 782.0,442.0" fill="none" stroke="#6b6b6b" stroke-width="1" /><rect x="858.0" y="445.3" width="31.0" height="1.4" fill="#6b6b6b"/><polyline points="889.0,442.0 912.0,446.0 889.0,450.0 889.0,442.0" fill="none" stroke="#6b6b6b" stroke-width="1" /><rect x="1005.0" y="445.3" width="30.7" height="1.4" fill="#6b6b6b"/><polyline points="1035.7,442.0 1058.7,446.0 1035.7,450.0 1035.7,442.0" fill="none" stroke="#6b6b6b" stroke-width="1" /><rect x="747.0" y="478.2" width="367.3" height="2" fill="#858585"/><rect x="774.3" y="479.0" width="2.2" height="166.7" fill="#858585"/><polyline points="769.0,482.0 775.4,490.0 782.0,482.0" fill="none" stroke="#858585" stroke-width="1.2" /><rect x="814.0" y="476.0" width="1" height="44.0" fill="#6b6b6b"/><path d="M814.5 476 L819 476 A 36 36 0 0 1 850.6 512.8" fill="none" stroke="#6b6b6b" stroke-width="1"/><rect x="775.0" y="519.2" width="39.5" height="1.6" fill="#6b6b6b"/><rect x="979.9" y="479.0" width="1" height="41.0" fill="#6b6b6b"/><path d="M980.4 479 A 32 32 0 0 0 949.4 507" fill="none" stroke="#6b6b6b" stroke-width="1"/><rect x="980.4" y="519.5" width="39.6" height="1" fill="#6b6b6b"/><rect x="1063.5" y="475.3" width="1" height="45.3" fill="#6b6b6b"/><path d="M1064 475.3 L1070 475.3 A 45 45 0 0 1 1109.5 520" fill="none" stroke="#6b6b6b" stroke-width="1"/><rect x="1010.0" y="520.1" width="54.0" height="1" fill="#6b6b6b"/><rect x="803.4" y="490.0" width="2.6" height="24.0" fill="none" stroke="#6b6b6b" stroke-width="1"/><rect x="1053.4" y="491.2" width="3.1" height="23.4" fill="none" stroke="#6b6b6b" stroke-width="1"/><rect x="777.0" y="524.3" width="13.6" height="5.7" fill="none" stroke="#6b6b6b" stroke-width="1.4"/><rect x="821.5" y="524.3" width="27.3" height="6.2" fill="none" stroke="#6b6b6b" stroke-width="1.4"/><rect x="851.1" y="513.0" width="1" height="58.8" fill="#6b6b6b"/><rect x="843.2" y="557.3" width="5.3" height="13.7" fill="none" stroke="#6b6b6b" stroke-width="1.3"/><rect x="780.6" y="570.9" width="71.0" height="1.8" fill="#6b6b6b"/><rect x="779.8" y="571.8" width="1.6" height="36.2" fill="#6b6b6b"/><rect x="777.0" y="564.4" width="13.6" height="7.4" fill="none" stroke="#6b6b6b" stroke-width="1.3"/><polyline points="747.0,535.3 762.4,535.3 762.4,877.0" fill="none" stroke="#6b6b6b" stroke-width="1.3" /><rect x="751.0" y="541.2" width="3.0" height="23.2" fill="none" stroke="#6b6b6b" stroke-width="1"/><rect x="751.0" y="577.4" width="3.0" height="23.9" fill="none" stroke="#6b6b6b" stroke-width="1"/><rect x="751.0" y="613.3" width="3.0" height="24.3" fill="none" stroke="#6b6b6b" stroke-width="1"/><rect x="751.0" y="661.2" width="3.0" height="23.6" fill="none" stroke="#6b6b6b" stroke-width="1"/><rect x="751.0" y="697.0" width="3.0" height="24.0" fill="none" stroke="#6b6b6b" stroke-width="1"/><rect x="751.0" y="733.2" width="3.0" height="23.8" fill="none" stroke="#6b6b6b" stroke-width="1"/><rect x="751.0" y="769.0" width="3.0" height="24.0" fill="none" stroke="#6b6b6b" stroke-width="1"/><rect x="751.0" y="805.0" width="3.0" height="24.0" fill="none" stroke="#6b6b6b" stroke-width="1"/><rect x="751.0" y="853.0" width="3.0" height="21.0" fill="none" stroke="#6b6b6b" stroke-width="1"/><rect x="747.0" y="570.1" width="15.0" height="1.8" fill="#6b6b6b"/><rect x="747.0" y="605.7" width="15.0" height="1.8" fill="#6b6b6b"/><rect x="747.0" y="642.1" width="15.0" height="1.8" fill="#6b6b6b"/><rect x="747.0" y="655.1" width="15.0" height="1.8" fill="#6b6b6b"/><rect x="747.0" y="689.8" width="15.0" height="1.8" fill="#6b6b6b"/><rect x="747.0" y="726.2" width="15.0" height="1.8" fill="#6b6b6b"/><rect x="747.0" y="762.1" width="15.0" height="1.8" fill="#6b6b6b"/><rect x="747.0" y="798.1" width="15.0" height="1.8" fill="#6b6b6b"/><rect x="747.0" y="834.1" width="15.0" height="1.8" fill="#6b6b6b"/><rect x="768.2" y="599.8" width="2.6" height="260.2" fill="#858585"/><rect x="755.7" y="668.0" width="1.2" height="144.0" fill="#6b6b6b"/><polyline points="747.0,592.4 769.5,609.4" fill="none" stroke="#858585" stroke-width="1.6" /><polyline points="775.4,645.7 751.0,670.5" fill="none" stroke="#858585" stroke-width="2" /><polyline points="769.5,745.0 777.0,737.0" fill="none" stroke="#858585" stroke-width="2" /><rect x="788" y="578.1" width="3.6" height="23.2" fill="#6b6b6b"/><rect x="1007.3" y="578.1" width="3.6" height="23.2" fill="#6b6b6b"/><rect x="788" y="614" width="3.6" height="23.6" fill="#6b6b6b"/><rect x="1007.3" y="614" width="3.6" height="23.6" fill="#6b6b6b"/><rect x="847.7" y="577.4" width="2.9" height="26.1" fill="none" stroke="#6b6b6b" stroke-width="1"/><rect x="941.3" y="577.4" width="3.1" height="26.1" fill="none" stroke="#6b6b6b" stroke-width="1"/><rect x="775.0" y="601.2" width="169.0" height="2" fill="#858585"/><rect x="780.6" y="606.8" width="71.0" height="1.8" fill="#6b6b6b"/><polyline points="781.0,607.7 781.0,643.8 851.4,643.8" fill="none" stroke="#6b6b6b" stroke-width="1.8" /><path d="M851.4 643.8 Q860.6 645 860.6 654.6 L860.6 764.5 Q860 772 851.4 774.5" fill="none" stroke="#6b6b6b" stroke-width="1"/><rect x="780.6" y="773.6" width="70.8" height="1.8" fill="#6b6b6b"/><rect x="779.9" y="774.5" width="1.4" height="71.5" fill="#6b6b6b"/><rect x="780.6" y="845.4" width="71.1" height="1.2" fill="#6b6b6b"/><rect x="851.2" y="846.0" width="1" height="31.0" fill="#6b6b6b"/><rect x="781.0" y="810.1" width="70.7" height="1.8" fill="#6b6b6b"/><rect x="788" y="781.5" width="3.6" height="22.8" fill="#6b6b6b"/><rect x="788" y="817.3" width="3.6" height="21.7" fill="#6b6b6b"/><rect x="847.7" y="815.4" width="2.9" height="25.8" fill="none" stroke="#6b6b6b" stroke-width="1"/><rect x="941.3" y="815.4" width="3.1" height="25.8" fill="none" stroke="#6b6b6b" stroke-width="1"/><rect x="768.0" y="821.0" width="439.3" height="2" fill="#858585"/><rect x="747.0" y="839.0" width="197.3" height="2" fill="#858585"/><polyline points="747.0,812.0 757.0,804.0 768.0,822.0" fill="none" stroke="#858585" stroke-width="1.2" /><polyline points="762.0,840.0 769.5,848.0 777.0,840.0" fill="none" stroke="#858585" stroke-width="1.2" /><rect x="762.4" y="848.3" width="26.3" height="25.3" fill="none" stroke="#6b6b6b" stroke-width="1"/><rect x="769.7" y="868.0" width="1.6" height="9.0" fill="#bdbdbd"/><rect x="776.2" y="868.0" width="1.6" height="9.0" fill="#bdbdbd"/><rect x="780.7" y="868.0" width="1.6" height="9.0" fill="#bdbdbd"/><path d="M945.7 643.8 Q938.4 644.5 938.4 651 L938.4 770 Q939 777.8 946 777.8" fill="none" stroke="#6b6b6b" stroke-width="1"/><polyline points="899.3,616.2 894.8,639.8 897.8,639.8 897.8,670.8 900.8,670.8 900.8,639.8 903.8,639.8 899.3,616.2" fill="none" stroke="#6b6b6b" stroke-width="1" /><polyline points="899.3,740.2 894.8,762.3 897.8,762.3 897.8,793.7 900.8,793.7 900.8,762.3 903.8,762.3 899.3,740.2" fill="none" stroke="#6b6b6b" stroke-width="1" /><polyline points="899.3,848.3 894.8,870.7 897.8,870.7 897.8,877.0 900.8,877.0 900.8,870.7 903.8,870.7 899.3,848.3" fill="none" stroke="#6b6b6b" stroke-width="1" /><rect x="950.6" y="522.8" width="26.9" height="7.2" fill="none" stroke="#6b6b6b" stroke-width="1.6"/><rect x="1007.2" y="534.2" width="3.4" height="24.3" rx="1.7" fill="#6b6b6b"/><rect x="949.4" y="562.8" width="70.6" height="1.8" fill="#6b6b6b"/><rect x="950.6" y="563.7" width="13.9" height="4.8" fill="none" stroke="#6b6b6b" stroke-width="1.3"/><rect x="949.4" y="571.0" width="69.1" height="1.6" fill="#6b6b6b"/><rect x="1017.8" y="529.0" width="1.4" height="116.0" fill="#6b6b6b"/><rect x="949.4" y="606.8" width="68.6" height="1.8" fill="#6b6b6b"/><rect x="949.4" y="642.9" width="70.6" height="1.8" fill="#6b6b6b"/><rect x="1012.3" y="522.6" width="16.7" height="5.9" fill="none" stroke="#6b6b6b" stroke-width="1.3"/><rect x="1016.6" y="528.5" width="2" height="34.5" fill="#6b6b6b"/><rect x="1012.0" y="563.0" width="17.0" height="5.6" fill="none" stroke="#6b6b6b" stroke-width="1.3"/><rect x="946.0" y="777.1" width="74.0" height="1.4" fill="#6b6b6b"/><rect x="1017.8" y="777.8" width="1.4" height="99.2" fill="#6b6b6b"/><rect x="1019.8" y="778.0" width="1" height="99.0" fill="#6b6b6b"/><rect x="1008.0" y="784.4" width="3.5" height="23.2" fill="none" stroke="#6b6b6b" stroke-width="1"/><rect x="1008.0" y="820.3" width="3.5" height="23.4" fill="none" stroke="#6b6b6b" stroke-width="1"/><rect x="1008.0" y="856.2" width="3.5" height="20.8" fill="none" stroke="#6b6b6b" stroke-width="1"/><rect x="949.0" y="813.3" width="71.0" height="1.8" fill="#6b6b6b"/><rect x="949.0" y="848.8" width="71.0" height="1.8" fill="#6b6b6b"/><polyline points="1109.5,520.0 1109.5,554.0 1038.7,554.0" fill="none" stroke="#6b6b6b" stroke-width="1.6" /><rect x="1038.1" y="554.0" width="1.2" height="71.0" fill="#6b6b6b"/><rect x="1040.1" y="554.0" width="1" height="71.0" fill="#6b6b6b"/><rect x="1092.4" y="524.4" width="14.4" height="11.1" fill="none" stroke="#6b6b6b" stroke-width="1.4"/><rect x="1047.0" y="560.3" width="3.0" height="23.1" fill="none" stroke="#6b6b6b" stroke-width="1"/><rect x="1040.0" y="589.3" width="69.8" height="1.8" fill="#6b6b6b"/><rect x="1047.0" y="596.2" width="3.0" height="23.2" fill="none" stroke="#6b6b6b" stroke-width="1"/><rect x="1047.0" y="673.3" width="3.0" height="23.2" fill="none" stroke="#6b6b6b" stroke-width="1"/><rect x="1047.0" y="722.5" width="3.0" height="22.9" fill="none" stroke="#6b6b6b" stroke-width="1"/><rect x="1047.0" y="778.8" width="3.0" height="22.7" fill="none" stroke="#6b6b6b" stroke-width="1"/><rect x="1047.0" y="814.0" width="3.0" height="23.8" fill="none" stroke="#6b6b6b" stroke-width="1"/><rect x="1047.0" y="850.2" width="3.0" height="24.7" fill="none" stroke="#6b6b6b" stroke-width="1"/><polyline points="1038.7,625.0 1109.5,625.0 1109.5,667.3 1038.7,667.3" fill="none" stroke="#6b6b6b" stroke-width="1.2" /><rect x="1038.1" y="667.3" width="1.2" height="84.3" fill="#6b6b6b"/><rect x="1040.1" y="667.3" width="1" height="84.3" fill="#6b6b6b"/><rect x="1092.4" y="644.3" width="14.4" height="10.9" fill="none" stroke="#6b6b6b" stroke-width="1.4"/><rect x="1035.4" y="702.2" width="74.4" height="1.8" fill="#6b6b6b"/><rect x="1035.4" y="715.9" width="74.4" height="1" fill="#6b6b6b"/><rect x="1034.9" y="703.0" width="1" height="13.4" fill="#6b6b6b"/><rect x="1057.9" y="703.0" width="1" height="13.4" fill="#6b6b6b"/><polyline points="1038.7,751.6 1109.5,751.6 1109.5,772.0 1038.7,772.0" fill="none" stroke="#6b6b6b" stroke-width="1.4" /><rect x="1038.1" y="772.0" width="1.2" height="105.0" fill="#6b6b6b"/><rect x="1040.1" y="772.0" width="1" height="105.0" fill="#6b6b6b"/><rect x="1079.5" y="763.7" width="27.3" height="5.8" fill="none" stroke="#6b6b6b" stroke-width="1.4"/><rect x="1040.0" y="807.1" width="69.8" height="1.8" fill="#6b6b6b"/><rect x="1040.0" y="843.6" width="180.0" height="2" fill="#858585"/><polyline points="1220.0,844.6 1236.3,860.5" fill="none" stroke="#858585" stroke-width="1.6" /><rect x="1235.0" y="850.7" width="2.6" height="26.3" fill="#858585"/><rect x="1105.5" y="820.4" width="3.8" height="26.2" fill="none" stroke="#6b6b6b" stroke-width="1"/><rect x="1199.4" y="820.4" width="3.6" height="26.2" fill="none" stroke="#6b6b6b" stroke-width="1"/><rect x="1157.1" y="539.2" width="1.6" height="30.6" fill="#6b6b6b"/><polyline points="1154.4,569.8 1161.4,569.8 1157.9,592.5 1154.4,569.8" fill="none" stroke="#6b6b6b" stroke-width="1" /><rect x="1157.1" y="713.0" width="1.6" height="30.6" fill="#6b6b6b"/><polyline points="1154.4,743.6 1161.4,743.6 1157.9,766.8 1154.4,743.6" fill="none" stroke="#6b6b6b" stroke-width="1" /><polyline points="1277.0,509.0 1206.0,509.0 1206.0,526.0 1277.0,526.0" fill="none" stroke="#6b6b6b" stroke-width="1.8" /><rect x="1209.3" y="512.5" width="10.9" height="11.0" fill="none" stroke="#6b6b6b" stroke-width="1.4"/><polyline points="1277.0,634.0 1206.0,634.0 1206.0,647.6 1277.0,647.6" fill="none" stroke="#6b6b6b" stroke-width="1.8" /><rect x="1209.3" y="637.5" width="10.9" height="7.6" fill="none" stroke="#6b6b6b" stroke-width="1.4"/><polyline points="1277.0,754.7 1206.0,754.7 1206.0,769.0 1277.0,769.0" fill="none" stroke="#6b6b6b" stroke-width="1.8" /><rect x="1209.3" y="758.2" width="10.9" height="8.3" fill="none" stroke="#6b6b6b" stroke-width="1.4"/><rect x="1276.0" y="526.0" width="2" height="108.0" fill="#6b6b6b"/><rect x="1276.0" y="647.6" width="2" height="107.1" fill="#6b6b6b"/><rect x="1276.0" y="769.0" width="2" height="108.0" fill="#6b6b6b"/><rect x="1206.0" y="560.9" width="71.0" height="1.8" fill="#6b6b6b"/><rect x="1206.0" y="597.1" width="71.0" height="1.8" fill="#6b6b6b"/><rect x="1206.0" y="682.0" width="71.0" height="1.8" fill="#6b6b6b"/><rect x="1206.0" y="718.2" width="71.0" height="1.8" fill="#6b6b6b"/><rect x="1206.0" y="804.0" width="71.0" height="1.8" fill="#6b6b6b"/><rect x="1206.0" y="839.9" width="71.0" height="1.8" fill="#6b6b6b"/><rect x="1206.0" y="875.9" width="71.0" height="1.2" fill="#6b6b6b"/><rect x="1266.3" y="479.4" width="2.7" height="23.1" fill="none" stroke="#6b6b6b" stroke-width="1"/><rect x="1266.3" y="532.0" width="2.7" height="23.7" fill="none" stroke="#6b6b6b" stroke-width="1"/><rect x="1266.3" y="568.3" width="2.7" height="23.1" fill="none" stroke="#6b6b6b" stroke-width="1"/><rect x="1266.3" y="604.2" width="2.7" height="23.0" fill="none" stroke="#6b6b6b" stroke-width="1"/><rect x="1266.3" y="653.2" width="2.7" height="23.2" fill="none" stroke="#6b6b6b" stroke-width="1"/><rect x="1266.3" y="689.2" width="2.7" height="23.4" fill="none" stroke="#6b6b6b" stroke-width="1"/><rect x="1266.3" y="726.2" width="2.7" height="22.4" fill="none" stroke="#6b6b6b" stroke-width="1"/><rect x="1266.3" y="775.0" width="2.7" height="23.5" fill="none" stroke="#6b6b6b" stroke-width="1"/><rect x="1266.3" y="811.4" width="2.7" height="22.9" fill="none" stroke="#6b6b6b" stroke-width="1"/><rect x="1266.3" y="847.2" width="2.7" height="23.1" fill="none" stroke="#6b6b6b" stroke-width="1"/><polyline points="1010.0,572.0 1018.3,572.0 1018.3,643.0 1010.0,643.0" fill="none" stroke="#6b6b6b" stroke-width="1.2" /><rect x="747.0" y="373.8" width="26.0" height="1.4" fill="#ffffff"/><rect x="747.0" y="419.8" width="26.0" height="1.4" fill="#ffffff"/><rect x="747.0" y="471.7" width="26.0" height="1.4" fill="#ffffff"/><rect x="747.0" y="519.1" width="26.0" height="1.4" fill="#ffffff"/><rect x="747.0" y="574.5" width="26.0" height="1.4" fill="#ffffff"/><rect x="747.0" y="626.6" width="26.0" height="1.4" fill="#ffffff"/><rect x="747.0" y="677.7" width="26.0" height="1.4" fill="#ffffff"/><rect x="747.0" y="729.3" width="26.0" height="1.4" fill="#ffffff"/><rect x="747.0" y="780.9" width="26.0" height="1.4" fill="#ffffff"/><rect x="747.0" y="832.8" width="26.0" height="1.4" fill="#ffffff"/><rect x="811.0" y="373.8" width="75.0" height="1.4" fill="#ffffff"/><rect x="888.0" y="373.8" width="37.0" height="1.4" fill="#ffffff"/><rect x="926.5" y="373.8" width="21.5" height="1.4" fill="#ffffff"/><rect x="811.0" y="419.8" width="75.0" height="1.4" fill="#ffffff"/><rect x="888.0" y="419.8" width="37.0" height="1.4" fill="#ffffff"/><rect x="926.5" y="419.8" width="21.5" height="1.4" fill="#ffffff"/><rect x="811.0" y="471.7" width="75.0" height="1.4" fill="#ffffff"/><rect x="888.0" y="471.7" width="37.0" height="1.4" fill="#ffffff"/><rect x="926.5" y="471.7" width="21.5" height="1.4" fill="#ffffff"/><rect x="811.0" y="520.7" width="75.0" height="1.4" fill="#ffffff"/><rect x="888.0" y="520.7" width="37.0" height="1.4" fill="#ffffff"/><rect x="926.5" y="520.7" width="21.5" height="1.4" fill="#ffffff"/><rect x="811.0" y="574.5" width="75.0" height="1.4" fill="#ffffff"/><rect x="888.0" y="574.5" width="37.0" height="1.4" fill="#ffffff"/><rect x="926.5" y="574.5" width="21.5" height="1.4" fill="#ffffff"/><rect x="811.0" y="626.6" width="75.0" height="1.4" fill="#ffffff"/><rect x="888.0" y="626.6" width="37.0" height="1.4" fill="#ffffff"/><rect x="926.5" y="626.6" width="21.5" height="1.4" fill="#ffffff"/><rect x="811.0" y="780.9" width="75.0" height="1.4" fill="#ffffff"/><rect x="888.0" y="780.9" width="37.0" height="1.4" fill="#ffffff"/><rect x="926.5" y="780.9" width="21.5" height="1.4" fill="#ffffff"/><rect x="811.0" y="832.8" width="75.0" height="1.4" fill="#ffffff"/><rect x="888.0" y="832.8" width="37.0" height="1.4" fill="#ffffff"/><rect x="926.5" y="832.8" width="21.5" height="1.4" fill="#ffffff"/><rect x="952.0" y="373.8" width="53.0" height="1.4" fill="#ffffff"/><rect x="952.0" y="419.8" width="53.0" height="1.4" fill="#ffffff"/><rect x="952.0" y="471.7" width="53.0" height="1.4" fill="#ffffff"/><rect x="952.0" y="574.5" width="53.0" height="1.4" fill="#ffffff"/><rect x="952.0" y="626.6" width="53.0" height="1.4" fill="#ffffff"/><rect x="952.0" y="780.9" width="53.0" height="1.4" fill="#ffffff"/><rect x="952.0" y="832.8" width="53.0" height="1.4" fill="#ffffff"/><rect x="1043.0" y="373.8" width="76.0" height="1.4" fill="#ffffff"/><rect x="1120.5" y="373.8" width="7.5" height="1.4" fill="#ffffff"/><rect x="1134.5" y="373.8" width="26.3" height="1.4" fill="#ffffff"/><rect x="1162.0" y="373.8" width="37.8" height="1.4" fill="#ffffff"/><rect x="1201.0" y="373.8" width="75.0" height="1.4" fill="#ffffff"/><rect x="1043.0" y="419.8" width="76.0" height="1.4" fill="#ffffff"/><rect x="1120.5" y="419.8" width="7.5" height="1.4" fill="#ffffff"/><rect x="1134.5" y="419.8" width="26.3" height="1.4" fill="#ffffff"/><rect x="1162.0" y="419.8" width="37.8" height="1.4" fill="#ffffff"/><rect x="1201.0" y="419.8" width="75.0" height="1.4" fill="#ffffff"/><rect x="1043.0" y="471.7" width="76.0" height="1.4" fill="#ffffff"/><rect x="1120.5" y="471.7" width="7.5" height="1.4" fill="#ffffff"/><rect x="1134.5" y="471.7" width="26.3" height="1.4" fill="#ffffff"/><rect x="1162.0" y="471.7" width="37.8" height="1.4" fill="#ffffff"/><rect x="1201.0" y="471.7" width="75.0" height="1.4" fill="#ffffff"/><rect x="1043.0" y="521.5" width="76.0" height="1.4" fill="#ffffff"/><rect x="1120.5" y="521.5" width="7.5" height="1.4" fill="#ffffff"/><rect x="1134.5" y="521.5" width="26.3" height="1.4" fill="#ffffff"/><rect x="1162.0" y="521.5" width="37.8" height="1.4" fill="#ffffff"/><rect x="1201.0" y="521.5" width="75.0" height="1.4" fill="#ffffff"/><rect x="1043.0" y="574.1" width="76.0" height="1.4" fill="#ffffff"/><rect x="1120.5" y="574.1" width="7.5" height="1.4" fill="#ffffff"/><rect x="1134.5" y="574.1" width="26.3" height="1.4" fill="#ffffff"/><rect x="1162.0" y="574.1" width="37.8" height="1.4" fill="#ffffff"/><rect x="1201.0" y="574.1" width="75.0" height="1.4" fill="#ffffff"/><rect x="1043.0" y="626.5" width="76.0" height="1.4" fill="#ffffff"/><rect x="1120.5" y="626.5" width="7.5" height="1.4" fill="#ffffff"/><rect x="1134.5" y="626.5" width="26.3" height="1.4" fill="#ffffff"/><rect x="1162.0" y="626.5" width="37.8" height="1.4" fill="#ffffff"/><rect x="1201.0" y="626.5" width="75.0" height="1.4" fill="#ffffff"/><rect x="1043.0" y="677.6" width="76.0" height="1.4" fill="#ffffff"/><rect x="1120.5" y="677.6" width="7.5" height="1.4" fill="#ffffff"/><rect x="1134.5" y="677.6" width="26.3" height="1.4" fill="#ffffff"/><rect x="1162.0" y="677.6" width="37.8" height="1.4" fill="#ffffff"/><rect x="1201.0" y="677.6" width="75.0" height="1.4" fill="#ffffff"/><rect x="1043.0" y="729.3" width="76.0" height="1.4" fill="#ffffff"/><rect x="1120.5" y="729.3" width="7.5" height="1.4" fill="#ffffff"/><rect x="1134.5" y="729.3" width="26.3" height="1.4" fill="#ffffff"/><rect x="1162.0" y="729.3" width="37.8" height="1.4" fill="#ffffff"/><rect x="1201.0" y="729.3" width="75.0" height="1.4" fill="#ffffff"/><rect x="1043.0" y="780.9" width="76.0" height="1.4" fill="#ffffff"/><rect x="1120.5" y="780.9" width="7.5" height="1.4" fill="#ffffff"/><rect x="1134.5" y="780.9" width="26.3" height="1.4" fill="#ffffff"/><rect x="1162.0" y="780.9" width="37.8" height="1.4" fill="#ffffff"/><rect x="1201.0" y="780.9" width="75.0" height="1.4" fill="#ffffff"/><rect x="1043.0" y="832.9" width="76.0" height="1.4" fill="#ffffff"/><rect x="1120.5" y="832.9" width="7.5" height="1.4" fill="#ffffff"/><rect x="1134.5" y="832.9" width="26.3" height="1.4" fill="#ffffff"/><rect x="1162.0" y="832.9" width="37.8" height="1.4" fill="#ffffff"/><rect x="1201.0" y="832.9" width="75.0" height="1.4" fill="#ffffff"/><rect x="1043.0" y="574.1" width="50.0" height="2.4" fill="#ffffff"/><rect x="948.6" y="374.0" width="1.8" height="301.0" fill="#ffffff"/><rect x="948.0" y="675.0" width="3.4" height="202.0" fill="#ffffff"/><rect x="1130.3" y="374.0" width="2.2" height="503.0" fill="#ffffff"/><rect x="949.0" y="675.0" width="1.5" height="202.0" fill="#8e0f28"/><rect x="949.1" y="697.0" width="1.2" height="2.5" fill="#fff"/><rect x="949.1" y="723.0" width="1.2" height="2.5" fill="#fff"/><rect x="949.1" y="749.0" width="1.2" height="2.5" fill="#fff"/><rect x="949.1" y="775.0" width="1.2" height="2.5" fill="#fff"/><rect x="949.1" y="801.0" width="1.2" height="2.5" fill="#fff"/><rect x="949.1" y="827.0" width="1.2" height="2.5" fill="#fff"/><rect x="949.1" y="853.0" width="1.2" height="2.5" fill="#fff"/><polyline points="948.0,521.4 860.2,521.4 860.2,540.4 850.2,540.4" fill="none" stroke="#ffffff" stroke-width="1.4" /><polyline points="949.4,530.2 1004.7,530.2 1004.7,522.4" fill="none" stroke="#ffffff" stroke-width="1.4" /><polyline points="966.4,515.4 978.5,515.4 978.5,530.2" fill="none" stroke="#ffffff" stroke-width="1.4" /><rect x="965.8" y="530.0" width="1.2" height="7.8" fill="#ffffff"/><polyline points="949.4,678.5 858.7,678.5 858.7,702.0 796.0,702.0" fill="none" stroke="#ffffff" stroke-width="1.4" /><rect x="845.5" y="720.7" width="103.9" height="1.4" fill="#ffffff"/><rect x="856.0" y="729.3" width="93.4" height="1.4" fill="#ffffff"/><rect x="949.4" y="701.1" width="57.6" height="1.4" fill="#ffffff"/><rect x="968.0" y="700.9" width="39.0" height="2.2" fill="#ffffff"/><rect x="833.5" y="719" width="11" height="5" rx="1.5" fill="#000" stroke="#fff" stroke-width="1.3"/><rect x="837.0" y="720.6" width="9.0" height="1.6" fill="#ffffff"/><rect x="1088.5" y="760.4" width="10.5" height="4.4" rx="1.2" fill="#000" stroke="#fff" stroke-width="1.3"/><rect x="1092.0" y="761.6" width="8.0" height="1.6" fill="#ffffff"/><rect x="1106.8" y="760.9" width="24.2" height="1.2" fill="#ffffff"/><polyline points="1075.5,877.0 1075.5,870.5 1082.0,870.5" fill="none" stroke="#ffffff" stroke-width="1.3" /><rect x="832" y="735" width="15.2" height="7" fill="#f2a23a" stroke="#ffb24d" stroke-width="0.8"/><text x="833.2" y="740.6" font-size="5.5" font-weight="700" fill="#2a1500" textLength="12.799999999999999" lengthAdjust="spacingAndGlyphs">FHC-2</text><rect x="1075" y="752.4" width="14.8" height="6.4" fill="#f2a23a" stroke="#ffb24d" stroke-width="0.8"/><text x="1076.2" y="757.4" font-size="5.5" font-weight="700" fill="#2a1500" textLength="12.4" lengthAdjust="spacingAndGlyphs">FHC-2</text><text x="746.0" y="371.7" font-size="3.6" fill="#e4e4e4" textLength="26" lengthAdjust="spacingAndGlyphs">Ø32mm S.C. Ø25mm</text><text x="746.0" y="675.6" font-size="3.6" fill="#e4e4e4" textLength="26" lengthAdjust="spacingAndGlyphs">Ø32mm S.C. Ø25mm</text><text x="746.0" y="778.8" font-size="3.6" fill="#e4e4e4" textLength="26" lengthAdjust="spacingAndGlyphs">Ø32mm S.C. Ø25mm</text><text x="817.0" y="371.7" font-size="3.6" fill="#e4e4e4" textLength="26" lengthAdjust="spacingAndGlyphs">Ø32mm S.C. Ø25mm</text><text x="857.0" y="371.7" font-size="3.6" fill="#e4e4e4" textLength="26" lengthAdjust="spacingAndGlyphs">Ø32mm S.C. Ø25mm</text><text x="895.0" y="371.7" font-size="3.6" fill="#e4e4e4" textLength="26" lengthAdjust="spacingAndGlyphs">Ø32mm S.C. Ø25mm</text><text x="817.0" y="417.7" font-size="3.6" fill="#e4e4e4" textLength="26" lengthAdjust="spacingAndGlyphs">Ø32mm S.C. Ø25mm</text><text x="857.0" y="417.7" font-size="3.6" fill="#e4e4e4" textLength="26" lengthAdjust="spacingAndGlyphs">Ø32mm S.C. Ø25mm</text><text x="895.0" y="417.7" font-size="3.6" fill="#e4e4e4" textLength="26" lengthAdjust="spacingAndGlyphs">Ø32mm S.C. Ø25mm</text><text x="817.0" y="469.6" font-size="3.6" fill="#e4e4e4" textLength="26" lengthAdjust="spacingAndGlyphs">Ø32mm S.C. Ø25mm</text><text x="857.0" y="469.6" font-size="3.6" fill="#e4e4e4" textLength="26" lengthAdjust="spacingAndGlyphs">Ø32mm S.C. Ø25mm</text><text x="895.0" y="469.6" font-size="3.6" fill="#e4e4e4" textLength="26" lengthAdjust="spacingAndGlyphs">Ø32mm S.C. Ø25mm</text><text x="817.0" y="518.6" font-size="3.6" fill="#e4e4e4" textLength="26" lengthAdjust="spacingAndGlyphs">Ø32mm S.C. Ø25mm</text><text x="857.0" y="518.6" font-size="3.6" fill="#e4e4e4" textLength="26" lengthAdjust="spacingAndGlyphs">Ø32mm S.C. Ø25mm</text><text x="895.0" y="518.6" font-size="3.6" fill="#e4e4e4" textLength="26" lengthAdjust="spacingAndGlyphs">Ø32mm S.C. Ø25mm</text><text x="817.0" y="572.4" font-size="3.6" fill="#e4e4e4" textLength="26" lengthAdjust="spacingAndGlyphs">Ø32mm S.C. Ø25mm</text><text x="857.0" y="572.4" font-size="3.6" fill="#e4e4e4" textLength="26" lengthAdjust="spacingAndGlyphs">Ø32mm S.C. Ø25mm</text><text x="895.0" y="572.4" font-size="3.6" fill="#e4e4e4" textLength="26" lengthAdjust="spacingAndGlyphs">Ø32mm S.C. Ø25mm</text><text x="817.0" y="624.5" font-size="3.6" fill="#e4e4e4" textLength="26" lengthAdjust="spacingAndGlyphs">Ø32mm S.C. Ø25mm</text><text x="857.0" y="624.5" font-size="3.6" fill="#e4e4e4" textLength="26" lengthAdjust="spacingAndGlyphs">Ø32mm S.C. Ø25mm</text><text x="895.0" y="624.5" font-size="3.6" fill="#e4e4e4" textLength="26" lengthAdjust="spacingAndGlyphs">Ø32mm S.C. Ø25mm</text><text x="817.0" y="778.8" font-size="3.6" fill="#e4e4e4" textLength="26" lengthAdjust="spacingAndGlyphs">Ø32mm S.C. Ø25mm</text><text x="857.0" y="778.8" font-size="3.6" fill="#e4e4e4" textLength="26" lengthAdjust="spacingAndGlyphs">Ø32mm S.C. Ø25mm</text><text x="895.0" y="778.8" font-size="3.6" fill="#e4e4e4" textLength="26" lengthAdjust="spacingAndGlyphs">Ø32mm S.C. Ø25mm</text><text x="817.0" y="830.7" font-size="3.6" fill="#e4e4e4" textLength="26" lengthAdjust="spacingAndGlyphs">Ø32mm S.C. Ø25mm</text><text x="857.0" y="830.7" font-size="3.6" fill="#e4e4e4" textLength="26" lengthAdjust="spacingAndGlyphs">Ø32mm S.C. Ø25mm</text><text x="895.0" y="830.7" font-size="3.6" fill="#e4e4e4" textLength="26" lengthAdjust="spacingAndGlyphs">Ø32mm S.C. Ø25mm</text><text x="972.0" y="371.7" font-size="3.6" fill="#e4e4e4" textLength="26" lengthAdjust="spacingAndGlyphs">Ø32mm S.C. Ø25mm</text><text x="972.0" y="417.7" font-size="3.6" fill="#e4e4e4" textLength="26" lengthAdjust="spacingAndGlyphs">Ø32mm S.C. Ø25mm</text><text x="972.0" y="469.6" font-size="3.6" fill="#e4e4e4" textLength="26" lengthAdjust="spacingAndGlyphs">Ø32mm S.C. Ø25mm</text><text x="972.0" y="572.4" font-size="3.6" fill="#e4e4e4" textLength="26" lengthAdjust="spacingAndGlyphs">Ø32mm S.C. Ø25mm</text><text x="972.0" y="624.5" font-size="3.6" fill="#e4e4e4" textLength="26" lengthAdjust="spacingAndGlyphs">Ø32mm S.C. Ø25mm</text><text x="972.0" y="778.8" font-size="3.6" fill="#e4e4e4" textLength="26" lengthAdjust="spacingAndGlyphs">Ø32mm S.C. Ø25mm</text><text x="972.0" y="830.7" font-size="3.6" fill="#e4e4e4" textLength="26" lengthAdjust="spacingAndGlyphs">Ø32mm S.C. Ø25mm</text><text x="1048.0" y="371.7" font-size="3.6" fill="#e4e4e4" textLength="26" lengthAdjust="spacingAndGlyphs">Ø32mm S.C. Ø25mm</text><text x="1088.0" y="371.7" font-size="3.6" fill="#e4e4e4" textLength="26" lengthAdjust="spacingAndGlyphs">Ø32mm S.C. Ø25mm</text><text x="1134.0" y="371.7" font-size="3.6" fill="#e4e4e4" textLength="26" lengthAdjust="spacingAndGlyphs">Ø32mm S.C. Ø25mm</text><text x="1165.0" y="371.7" font-size="3.6" fill="#e4e4e4" textLength="26" lengthAdjust="spacingAndGlyphs">Ø32mm S.C. Ø25mm</text><text x="1205.0" y="371.7" font-size="3.6" fill="#e4e4e4" textLength="26" lengthAdjust="spacingAndGlyphs">Ø32mm S.C. Ø25mm</text><text x="1249.0" y="371.7" font-size="3.6" fill="#e4e4e4" textLength="26" lengthAdjust="spacingAndGlyphs">Ø32mm S.C. Ø25mm</text><text x="1048.0" y="417.7" font-size="3.6" fill="#e4e4e4" textLength="26" lengthAdjust="spacingAndGlyphs">Ø32mm S.C. Ø25mm</text><text x="1088.0" y="417.7" font-size="3.6" fill="#e4e4e4" textLength="26" lengthAdjust="spacingAndGlyphs">Ø32mm S.C. Ø25mm</text><text x="1134.0" y="417.7" font-size="3.6" fill="#e4e4e4" textLength="26" lengthAdjust="spacingAndGlyphs">Ø32mm S.C. Ø25mm</text><text x="1165.0" y="417.7" font-size="3.6" fill="#e4e4e4" textLength="26" lengthAdjust="spacingAndGlyphs">Ø32mm S.C. Ø25mm</text><text x="1205.0" y="417.7" font-size="3.6" fill="#e4e4e4" textLength="26" lengthAdjust="spacingAndGlyphs">Ø32mm S.C. Ø25mm</text><text x="1249.0" y="417.7" font-size="3.6" fill="#e4e4e4" textLength="26" lengthAdjust="spacingAndGlyphs">Ø32mm S.C. Ø25mm</text><text x="1048.0" y="469.6" font-size="3.6" fill="#e4e4e4" textLength="26" lengthAdjust="spacingAndGlyphs">Ø32mm S.C. Ø25mm</text><text x="1088.0" y="469.6" font-size="3.6" fill="#e4e4e4" textLength="26" lengthAdjust="spacingAndGlyphs">Ø32mm S.C. Ø25mm</text><text x="1134.0" y="469.6" font-size="3.6" fill="#e4e4e4" textLength="26" lengthAdjust="spacingAndGlyphs">Ø32mm S.C. Ø25mm</text><text x="1165.0" y="469.6" font-size="3.6" fill="#e4e4e4" textLength="26" lengthAdjust="spacingAndGlyphs">Ø32mm S.C. Ø25mm</text><text x="1205.0" y="469.6" font-size="3.6" fill="#e4e4e4" textLength="26" lengthAdjust="spacingAndGlyphs">Ø32mm S.C. Ø25mm</text><text x="1249.0" y="469.6" font-size="3.6" fill="#e4e4e4" textLength="26" lengthAdjust="spacingAndGlyphs">Ø32mm S.C. Ø25mm</text><text x="1048.0" y="519.4" font-size="3.6" fill="#e4e4e4" textLength="26" lengthAdjust="spacingAndGlyphs">Ø32mm S.C. Ø25mm</text><text x="1088.0" y="519.4" font-size="3.6" fill="#e4e4e4" textLength="26" lengthAdjust="spacingAndGlyphs">Ø32mm S.C. Ø25mm</text><text x="1134.0" y="519.4" font-size="3.6" fill="#e4e4e4" textLength="26" lengthAdjust="spacingAndGlyphs">Ø32mm S.C. Ø25mm</text><text x="1165.0" y="519.4" font-size="3.6" fill="#e4e4e4" textLength="26" lengthAdjust="spacingAndGlyphs">Ø32mm S.C. Ø25mm</text><text x="1205.0" y="519.4" font-size="3.6" fill="#e4e4e4" textLength="26" lengthAdjust="spacingAndGlyphs">Ø32mm S.C. Ø25mm</text><text x="1249.0" y="519.4" font-size="3.6" fill="#e4e4e4" textLength="26" lengthAdjust="spacingAndGlyphs">Ø32mm S.C. Ø25mm</text><text x="1048.0" y="572.0" font-size="3.6" fill="#e4e4e4" textLength="26" lengthAdjust="spacingAndGlyphs">Ø32mm S.C. Ø25mm</text><text x="1088.0" y="572.0" font-size="3.6" fill="#e4e4e4" textLength="26" lengthAdjust="spacingAndGlyphs">Ø32mm S.C. Ø25mm</text><text x="1134.0" y="572.0" font-size="3.6" fill="#e4e4e4" textLength="26" lengthAdjust="spacingAndGlyphs">Ø32mm S.C. Ø25mm</text><text x="1165.0" y="572.0" font-size="3.6" fill="#e4e4e4" textLength="26" lengthAdjust="spacingAndGlyphs">Ø32mm S.C. Ø25mm</text><text x="1205.0" y="572.0" font-size="3.6" fill="#e4e4e4" textLength="26" lengthAdjust="spacingAndGlyphs">Ø32mm S.C. Ø25mm</text><text x="1249.0" y="572.0" font-size="3.6" fill="#e4e4e4" textLength="26" lengthAdjust="spacingAndGlyphs">Ø32mm S.C. Ø25mm</text><text x="1048.0" y="624.4" font-size="3.6" fill="#e4e4e4" textLength="26" lengthAdjust="spacingAndGlyphs">Ø32mm S.C. Ø25mm</text><text x="1088.0" y="624.4" font-size="3.6" fill="#e4e4e4" textLength="26" lengthAdjust="spacingAndGlyphs">Ø32mm S.C. Ø25mm</text><text x="1134.0" y="624.4" font-size="3.6" fill="#e4e4e4" textLength="26" lengthAdjust="spacingAndGlyphs">Ø32mm S.C. Ø25mm</text><text x="1165.0" y="624.4" font-size="3.6" fill="#e4e4e4" textLength="26" lengthAdjust="spacingAndGlyphs">Ø32mm S.C. Ø25mm</text><text x="1205.0" y="624.4" font-size="3.6" fill="#e4e4e4" textLength="26" lengthAdjust="spacingAndGlyphs">Ø32mm S.C. Ø25mm</text><text x="1249.0" y="624.4" font-size="3.6" fill="#e4e4e4" textLength="26" lengthAdjust="spacingAndGlyphs">Ø32mm S.C. Ø25mm</text><text x="1048.0" y="675.5" font-size="3.6" fill="#e4e4e4" textLength="26" lengthAdjust="spacingAndGlyphs">Ø32mm S.C. Ø25mm</text><text x="1088.0" y="675.5" font-size="3.6" fill="#e4e4e4" textLength="26" lengthAdjust="spacingAndGlyphs">Ø32mm S.C. Ø25mm</text><text x="1134.0" y="675.5" font-size="3.6" fill="#e4e4e4" textLength="26" lengthAdjust="spacingAndGlyphs">Ø32mm S.C. Ø25mm</text><text x="1165.0" y="675.5" font-size="3.6" fill="#e4e4e4" textLength="26" lengthAdjust="spacingAndGlyphs">Ø32mm S.C. Ø25mm</text><text x="1205.0" y="675.5" font-size="3.6" fill="#e4e4e4" textLength="26" lengthAdjust="spacingAndGlyphs">Ø32mm S.C. Ø25mm</text><text x="1249.0" y="675.5" font-size="3.6" fill="#e4e4e4" textLength="26" lengthAdjust="spacingAndGlyphs">Ø32mm S.C. Ø25mm</text><text x="1048.0" y="727.2" font-size="3.6" fill="#e4e4e4" textLength="26" lengthAdjust="spacingAndGlyphs">Ø32mm S.C. Ø25mm</text><text x="1088.0" y="727.2" font-size="3.6" fill="#e4e4e4" textLength="26" lengthAdjust="spacingAndGlyphs">Ø32mm S.C. Ø25mm</text><text x="1134.0" y="727.2" font-size="3.6" fill="#e4e4e4" textLength="26" lengthAdjust="spacingAndGlyphs">Ø32mm S.C. Ø25mm</text><text x="1165.0" y="727.2" font-size="3.6" fill="#e4e4e4" textLength="26" lengthAdjust="spacingAndGlyphs">Ø32mm S.C. Ø25mm</text><text x="1205.0" y="727.2" font-size="3.6" fill="#e4e4e4" textLength="26" lengthAdjust="spacingAndGlyphs">Ø32mm S.C. Ø25mm</text><text x="1249.0" y="727.2" font-size="3.6" fill="#e4e4e4" textLength="26" lengthAdjust="spacingAndGlyphs">Ø32mm S.C. Ø25mm</text><text x="1048.0" y="778.8" font-size="3.6" fill="#e4e4e4" textLength="26" lengthAdjust="spacingAndGlyphs">Ø32mm S.C. Ø25mm</text><text x="1088.0" y="778.8" font-size="3.6" fill="#e4e4e4" textLength="26" lengthAdjust="spacingAndGlyphs">Ø32mm S.C. Ø25mm</text><text x="1134.0" y="778.8" font-size="3.6" fill="#e4e4e4" textLength="26" lengthAdjust="spacingAndGlyphs">Ø32mm S.C. Ø25mm</text><text x="1165.0" y="778.8" font-size="3.6" fill="#e4e4e4" textLength="26" lengthAdjust="spacingAndGlyphs">Ø32mm S.C. Ø25mm</text><text x="1205.0" y="778.8" font-size="3.6" fill="#e4e4e4" textLength="26" lengthAdjust="spacingAndGlyphs">Ø32mm S.C. Ø25mm</text><text x="1249.0" y="778.8" font-size="3.6" fill="#e4e4e4" textLength="26" lengthAdjust="spacingAndGlyphs">Ø32mm S.C. Ø25mm</text><text x="1048.0" y="830.8" font-size="3.6" fill="#e4e4e4" textLength="26" lengthAdjust="spacingAndGlyphs">Ø32mm S.C. Ø25mm</text><text x="1088.0" y="830.8" font-size="3.6" fill="#e4e4e4" textLength="26" lengthAdjust="spacingAndGlyphs">Ø32mm S.C. Ø25mm</text><text x="1134.0" y="830.8" font-size="3.6" fill="#e4e4e4" textLength="26" lengthAdjust="spacingAndGlyphs">Ø32mm S.C. Ø25mm</text><text x="1165.0" y="830.8" font-size="3.6" fill="#e4e4e4" textLength="26" lengthAdjust="spacingAndGlyphs">Ø32mm S.C. Ø25mm</text><text x="1205.0" y="830.8" font-size="3.6" fill="#e4e4e4" textLength="26" lengthAdjust="spacingAndGlyphs">Ø32mm S.C. Ø25mm</text><text x="1249.0" y="830.8" font-size="3.6" fill="#e4e4e4" textLength="26" lengthAdjust="spacingAndGlyphs">Ø32mm S.C. Ø25mm</text><text transform="translate(947.4,410.0) rotate(-90)" font-size="3.6" fill="#e4e4e4" textLength="26" lengthAdjust="spacingAndGlyphs">Ø32mm S.C. Ø40mm</text><text transform="translate(1128.9,410.0) rotate(-90)" font-size="3.6" fill="#e4e4e4" textLength="26" lengthAdjust="spacingAndGlyphs">Ø32mm S.C. Ø40mm</text><text transform="translate(947.4,456.0) rotate(-90)" font-size="3.6" fill="#e4e4e4" textLength="26" lengthAdjust="spacingAndGlyphs">Ø32mm S.C. Ø40mm</text><text transform="translate(1128.9,456.0) rotate(-90)" font-size="3.6" fill="#e4e4e4" textLength="26" lengthAdjust="spacingAndGlyphs">Ø32mm S.C. Ø40mm</text><text transform="translate(947.4,510.0) rotate(-90)" font-size="3.6" fill="#e4e4e4" textLength="26" lengthAdjust="spacingAndGlyphs">Ø32mm S.C. Ø40mm</text><text transform="translate(1128.9,510.0) rotate(-90)" font-size="3.6" fill="#e4e4e4" textLength="26" lengthAdjust="spacingAndGlyphs">Ø32mm S.C. Ø40mm</text><text transform="translate(947.4,562.0) rotate(-90)" font-size="3.6" fill="#e4e4e4" textLength="26" lengthAdjust="spacingAndGlyphs">Ø32mm S.C. Ø40mm</text><text transform="translate(1128.9,562.0) rotate(-90)" font-size="3.6" fill="#e4e4e4" textLength="26" lengthAdjust="spacingAndGlyphs">Ø32mm S.C. Ø40mm</text><text transform="translate(947.4,614.0) rotate(-90)" font-size="3.6" fill="#e4e4e4" textLength="26" lengthAdjust="spacingAndGlyphs">Ø32mm S.C. Ø40mm</text><text transform="translate(1128.9,614.0) rotate(-90)" font-size="3.6" fill="#e4e4e4" textLength="26" lengthAdjust="spacingAndGlyphs">Ø32mm S.C. Ø40mm</text><text transform="translate(947.4,666.0) rotate(-90)" font-size="3.6" fill="#e4e4e4" textLength="26" lengthAdjust="spacingAndGlyphs">Ø32mm S.C. Ø40mm</text><text transform="translate(1128.9,666.0) rotate(-90)" font-size="3.6" fill="#e4e4e4" textLength="26" lengthAdjust="spacingAndGlyphs">Ø32mm S.C. Ø40mm</text><text transform="translate(947.4,718.0) rotate(-90)" font-size="3.6" fill="#e4e4e4" textLength="26" lengthAdjust="spacingAndGlyphs">Ø32mm S.C. Ø40mm</text><text transform="translate(1128.9,718.0) rotate(-90)" font-size="3.6" fill="#e4e4e4" textLength="26" lengthAdjust="spacingAndGlyphs">Ø32mm S.C. Ø40mm</text><text transform="translate(947.4,770.0) rotate(-90)" font-size="3.6" fill="#e4e4e4" textLength="26" lengthAdjust="spacingAndGlyphs">Ø32mm S.C. Ø40mm</text><text transform="translate(1128.9,770.0) rotate(-90)" font-size="3.6" fill="#e4e4e4" textLength="26" lengthAdjust="spacingAndGlyphs">Ø32mm S.C. Ø40mm</text><text transform="translate(947.4,822.0) rotate(-90)" font-size="3.6" fill="#e4e4e4" textLength="26" lengthAdjust="spacingAndGlyphs">Ø32mm S.C. Ø40mm</text><text transform="translate(1128.9,822.0) rotate(-90)" font-size="3.6" fill="#e4e4e4" textLength="26" lengthAdjust="spacingAndGlyphs">Ø32mm S.C. Ø40mm</text><text transform="translate(947.4,871.0) rotate(-90)" font-size="3.6" fill="#e4e4e4" textLength="26" lengthAdjust="spacingAndGlyphs">Ø32mm S.C. Ø40mm</text><text transform="translate(1128.9,871.0) rotate(-90)" font-size="3.6" fill="#e4e4e4" textLength="26" lengthAdjust="spacingAndGlyphs">Ø32mm S.C. Ø40mm</text><text transform="translate(857.4,542.0) rotate(-90)" font-size="3.6" fill="#e4e4e4" textLength="22" lengthAdjust="spacingAndGlyphs">Ø32mm S.C. Ø40mm</text><text x="966.0" y="512.7" font-size="3.6" fill="#e4e4e4" textLength="26" lengthAdjust="spacingAndGlyphs">Ø32mm S.C. Ø25mm</text><text x="953.0" y="529.2" font-size="3.6" fill="#e4e4e4" textLength="26" lengthAdjust="spacingAndGlyphs">Ø32mm S.C. Ø25mm</text><text x="980.0" y="529.2" font-size="3.6" fill="#e4e4e4" textLength="26" lengthAdjust="spacingAndGlyphs">Ø32mm S.C. Ø25mm</text><text x="856.0" y="675.7" font-size="3.6" fill="#e4e4e4" textLength="26" lengthAdjust="spacingAndGlyphs">Ø32mm S.C. Ø25mm</text><text x="892.0" y="675.7" font-size="3.6" fill="#e4e4e4" textLength="26" lengthAdjust="spacingAndGlyphs">Ø32mm S.C. Ø25mm</text><text x="798.0" y="699.2" font-size="3.6" fill="#e4e4e4" textLength="26" lengthAdjust="spacingAndGlyphs">Ø32mm S.C. Ø25mm</text><text x="879.0" y="718.7" font-size="3.6" fill="#e4e4e4" textLength="26" lengthAdjust="spacingAndGlyphs">Ø32mm S.C. Ø25mm</text><text x="859.0" y="727.2" font-size="3.6" fill="#e4e4e4" textLength="26" lengthAdjust="spacingAndGlyphs">Ø32mm S.C. Ø25mm</text><text x="894.0" y="727.2" font-size="3.6" fill="#e4e4e4" textLength="26" lengthAdjust="spacingAndGlyphs">Ø32mm S.C. Ø25mm</text><text x="978.0" y="699.2" font-size="3.6" fill="#e4e4e4" textLength="26" lengthAdjust="spacingAndGlyphs">Ø32mm S.C. Ø25mm</text><text x="1106.0" y="758.7" font-size="3.6" fill="#e4e4e4" textLength="22" lengthAdjust="spacingAndGlyphs">Ø32mm S.C. Ø25mm</text></svg>
<div style="position:absolute;left:296px;top:2px;width:1px;height:28px;background:#9d9d9d;"></div>
<div style="position:absolute;left:440px;top:2px;width:1px;height:28px;background:#9d9d9d;"></div>
<div style="position:absolute;left:554px;top:2px;width:1px;height:28px;background:#9d9d9d;"></div>
<div style="position:absolute;left:1706px;top:5px;width:1px;height:22px;background:#9d9d9d;"></div>
<div style="position:absolute;left:950px;top:994px;width:1px;height:19px;background:#ececec;"></div>
<div style="position:absolute;left:1329px;top:994px;width:1px;height:19px;background:#ececec;"></div>
<svg style="position:absolute;left:0;top:0" width="1918" height="1017" viewBox="0 0 1918 1017" font-family="Liberation Sans, sans-serif"><defs>
<linearGradient id="gm" x1="0" y1="0" x2="0" y2="1"><stop offset="0" stop-color="#fdfdfd"/><stop offset="1" stop-color="#c2c2c2"/></linearGradient>
<linearGradient id="gh" x1="0" y1="0" x2="1" y2="0"><stop offset="0" stop-color="#c6c6c6"/><stop offset=".45" stop-color="#ffffff"/><stop offset="1" stop-color="#b4b4b4"/></linearGradient>
<linearGradient id="gv" x1="0" y1="0" x2="0" y2="1"><stop offset="0" stop-color="#bdbdbd"/><stop offset=".4" stop-color="#ffffff"/><stop offset="1" stop-color="#a9a9a9"/></linearGradient>
<linearGradient id="gl" x1="0" y1="0" x2="0" y2="1"><stop offset="0" stop-color="#f7f7f7"/><stop offset="1" stop-color="#dcdcdc"/></linearGradient>
<linearGradient id="gb" x1="0" y1="0" x2="0" y2="1"><stop offset="0" stop-color="#bfe0fb"/><stop offset="1" stop-color="#5aa2e0"/></linearGradient>
<linearGradient id="gd" x1="0" y1="0" x2="1" y2="1"><stop offset="0" stop-color="#e9edf2"/><stop offset="1" stop-color="#b9c0c8"/></linearGradient>
<linearGradient id="gf" x1="0" y1="0" x2="1" y2="0"><stop offset="0" stop-color="#8e8e8e"/><stop offset=".5" stop-color="#ffffff"/><stop offset="1" stop-color="#8e8e8e"/></linearGradient>
<linearGradient id="ga" x1="0" y1="0" x2="1" y2="1"><stop offset="0" stop-color="#f4f4f4"/><stop offset="1" stop-color="#8f8f8f"/></linearGradient>
</defs><text x="8.5" y="26" font-size="30.5" font-weight="700" fill="#2f7cc7" textLength="18.5" lengthAdjust="spacingAndGlyphs">R</text><path d="M9 13 L14 26 L9 26 Z" fill="#1d4f86" opacity=".5"/><g transform="translate(37.5,7.5)"><rect x="0" y="0" width="17" height="16.5" rx="1.5" fill="#4d4d4d"/><rect x="1.5" y="4" width="14" height="11" fill="#fafafa"/><rect x="1.5" y="4" width="4.5" height="11" fill="#bdbdbd"/><rect x="1.8" y="1.2" width="2.4" height="2" fill="#a9d4fb"/><rect x="8" y="7" width="6" height="1.4" fill="#444"/><rect x="8" y="10" width="6" height="1.4" fill="#444"/><rect x="2.4" y="6.5" width="2.6" height="1.6" fill="#fff"/><rect x="2.4" y="9.5" width="2.6" height="1.6" fill="#fff"/><rect x="2.4" y="12.3" width="2.6" height="1.6" fill="#fff"/></g><g transform="translate(71,10)"><path d="M.8 12.6 V1.2 H6.5 L8.2 3 H15.5 V6" fill="#e9e9e9" stroke="#595959" stroke-width="1.3"/><path d="M.8 12.6 L5 6 H19.2 L15 12.6 Z" fill="url(#gd)" stroke="#595959" stroke-width="1.3" stroke-linejoin="round"/></g><g transform="translate(101,6)"><rect x=".7" y=".7" width="18.4" height="18.6" rx="1.8" fill="#4f5566" stroke="#4a4a4a" stroke-width="1.2"/><rect x="3.5" y="1" width="12.5" height="9" fill="url(#gl)"/><rect x="4" y="12.5" width="11.5" height="6.3" fill="#fff"/><rect x="5.3" y="14" width="2" height="3.4" fill="#555"/></g><g transform="translate(131,6)"><path d="M9 1 L16.5 4.2 V12.5 L9 16.5 L1.5 12.5 V4.2 Z" fill="url(#gl)" stroke="#6a6a6a" stroke-width="1.2"/><path d="M1.5 4.2 L9 7.6 L16.5 4.2 M9 7.6 V16.5" fill="none" stroke="#8a8a8a" stroke-width="1"/><circle cx="14.5" cy="14.5" r="4.6" fill="none" stroke="#2fd042" stroke-width="2.2" stroke-dasharray="9 5.4"/><path d="M17.3 8.8 l2.2 3.4 h-4.2z M11.8 20 l-2.2 -3.4 h4.2z" fill="#2fd042"/></g><path d="M161.5 14.5 h6 l-3.0 3.2 z" fill="#3c3c3c"/><g transform="translate(176,8)"><path d="M.8 6 L8 .8 V4 H12 Q18 4 18 10 V13 H14 V10.5 Q14 8 11.5 8 H8 V11.2 Z" fill="#fbfbfb" stroke="#4a4a4a" stroke-width="1.3" stroke-linejoin="round"/></g><path d="M205 14.5 h6 l-3.0 3.2 z" fill="#3c3c3c"/><g transform="translate(222,8)"><path d="M18.2 6 L11 .8 V4 H7 Q1 4 1 10 V13 H5 V10.5 Q5 8 7.5 8 H11 V11.2 Z" fill="#a4a4a4" stroke="#8d8d8d" stroke-width="1.2" stroke-linejoin="round"/></g><path d="M250 14.5 h6 l-3.0 3.2 z" fill="#5c5c5c"/><g transform="translate(266,7)"><rect x="5" y=".6" width="10" height="5" fill="#fff" stroke="#4a4a4a" stroke-width="1.2"/><rect x=".7" y="5" width="18.6" height="9" rx="2" fill="#f4f4f4" stroke="#4a4a4a" stroke-width="1.3"/><rect x="1.5" y="10.5" width="17" height="3" fill="#4a4a4a"/><rect x="4.5" y="12" width="11" height="5.6" fill="#fff" stroke="#4a4a4a" stroke-width="1.2"/><rect x="7" y="14" width="6" height="1.2" fill="#7fb2e8"/></g><g transform="translate(305,9)"><path d="M0 4 L4.2 .8 V3.1 H14.8 V.8 L19 4 L14.8 7.2 V4.9 H4.2 V7.2 Z" fill="#454545"/><rect x="0" y="8.6" width="19" height="4.6" rx="1.6" fill="#e58a0f"/><path d="M2 11 h15" stroke="#fff" stroke-width="1.2" stroke-dasharray="1.4 1"/></g><path d="M335 14.5 h6 l-3.0 3.2 z" fill="#3c3c3c"/><g transform="translate(349,6)"><path d="M4.5 16.5 L16.5 4.5" stroke="#454545" stroke-width="1.6"/><path d="M3 13.5 L3.6 18 L8 17.4 Z M18 7.5 L17.4 3 L13 3.6 Z" fill="#454545"/><path d="M0 15.5 L5 20.5 M14.5 .8 L20 6" stroke="#454545" stroke-width="1.5"/></g><g transform="translate(380,10)"><path d="M3 10.5 V5 H8" fill="none" stroke="#454545" stroke-width="1.4"/><rect x="1.3" y="10.3" width="3.4" height="3.4" fill="#fff" stroke="#454545" stroke-width="1.1"/><path d="M12.5 .6 L17.6 3.3 V8.6 L12.5 11.3 L7.4 8.6 V3.3 Z" fill="#fff" stroke="#d0d0d0" stroke-width=".8"/><text x="10.6" y="9" font-size="8.5" font-weight="700" fill="#333">1</text></g><text x="410.5" y="25" font-size="25" fill="#3e3e3e" textLength="17" lengthAdjust="spacingAndGlyphs">A</text><g transform="translate(449,7)"><path d="M.8 8 L8 1 L18.2 4.5 V13 L8.5 16.6 L.8 13.5 Z" fill="url(#gl)" stroke="#595959" stroke-width="1.2" stroke-linejoin="round"/><path d="M8 1 L12.5 8.5 V15 M12.5 8.5 L18.2 6.4 M.8 8 L3.5 8.5 L8 1" fill="none" stroke="#8a8a8a" stroke-width="1"/><path d="M3.8 14.5 V10.5 Q5.5 8.6 7 10.8 V15.8 Z" fill="#666"/><rect x="13.6" y="9.8" width="3" height="3" fill="#9db7d6" transform="skewY(-18) translate(0 4.5)"/></g><path d="M479 14.5 h6 l-3.0 3.2 z" fill="#3c3c3c"/><g transform="translate(495,8)"><path d="M5.5 0 L16 7.5 L5.5 15 Z" fill="#3e3e3e"/><path d="M5.6 12 v4" stroke="#3e3e3e" stroke-width="1.4"/><circle cx="5.6" cy="7.2" r="4.9" fill="#f3f3f3" stroke="#4a4a4a" stroke-width="1.2"/></g><g transform="translate(524,7)"><rect x="0" y="1" width="9" height="3.4" fill="#454545"/><rect x="0" y="8" width="7" height="3" fill="#454545"/><rect x="0" y="15" width="5" height="2.4" fill="#454545"/><path d="M12 2.7 H20 M10.5 9.5 H20 M9 16.2 H20" stroke="#4a4a4a" stroke-width="1"/><path d="M14 0 L7 19" stroke="#2f8fe8" stroke-width="1.8"/></g><g transform="translate(564,6)"><rect x="0" y="0" width="8.6" height="9" fill="url(#gl)" stroke="#bcbcbc" stroke-width=".8"/><rect x="9.8" y="0" width="8.6" height="9" fill="url(#gl)" stroke="#bcbcbc" stroke-width=".8"/><rect x="0" y="10.2" width="8.6" height="9" fill="url(#gl)" stroke="#bcbcbc" stroke-width=".8"/><rect x="9.8" y="10.2" width="6" height="6" fill="url(#gl)" stroke="#bcbcbc" stroke-width=".8"/><path d="M11 13 L18.5 19.5 M18.5 13 L11 19.5" stroke="#d97412" stroke-width="2.2"/></g><g transform="translate(593,5)"><rect x="1" y="1.2" width="13" height="10.5" fill="#f6f6f6" stroke="#3e3e3e" stroke-width="1.5"/><rect x="1" y="1.2" width="13" height="2.4" fill="#3e3e3e"/><rect x="7" y="8.7" width="13" height="10.5" fill="#f6f6f6" stroke="#3e3e3e" stroke-width="1.5"/><rect x="7" y="8.7" width="13" height="2.4" fill="#3e3e3e"/><path d="M16 2.5 q3.5 .5 3.5 4 M4.5 18 q-3.5 -.5 -3.5 -4" fill="none" stroke="#222" stroke-width="1.3"/><path d="M18 5.5 h3.2 l-1.6 2.4z M-.6 14.8 h3.2 l-1.6 -2.4z" fill="#222"/></g><path d="M620 14.5 h6 l-3.0 3.2 z" fill="#3c3c3c"/><rect x="637" y="11" width="10" height="1.8" fill="#3c3c3c"/><path d="M637 14.5 h10 l-5.0 4.6 z" fill="#3c3c3c"/><path d="M1481 12 v9 l-5.5 -4.5z" fill="#3c3c3c"/><g transform="translate(1492,7)"><path d="M2 5 L4 .8 H7.5 L8.5 5 V16 Q8.5 17.6 7 17.6 H2.4 Q.8 17.6 .8 16 Z M18 5 L16 .8 H12.5 L11.5 5 V16 Q11.5 17.6 13 17.6 H17.6 Q19.2 17.6 19.2 16 Z" fill="#f4f4f4" stroke="#3e3e3e" stroke-width="1.3"/><rect x="8" y="5" width="4" height="5" fill="#3e3e3e"/><path d="M2.5 6.5 V15 M17.5 6.5 V15" stroke="#bdbdbd" stroke-width="1.6"/></g><g transform="translate(1522,6)"><path d="M.8 18.6 Q.8 14.5 6.5 13 Q4.4 10.5 4.4 6.5 Q4.4 .8 10.2 .8 Q16 .8 16 6.5 Q16 10.5 13.9 13 Q19.6 14.5 19.6 18.6 Z" fill="#f2f2f2" stroke="#3e3e3e" stroke-width="1.3"/><path d="M6.5 13 Q10.2 17 13.9 13" fill="none" stroke="#9a9a9a" stroke-width="1"/></g><path d="M1655 15 h7 l-3.5 3.4 z" fill="#3c3c3c"/><g transform="translate(1674,8)"><path d="M0 1 H3.6 L6.5 11 H16.5 L19.5 3.5 H5" fill="#f4f4f4" stroke="#3a3a3a" stroke-width="1.5" stroke-linejoin="round"/><path d="M1 .6 L4 1.6" stroke="#2a59c7" stroke-width="1.6"/><circle cx="8" cy="14.8" r="1.7" fill="#fff" stroke="#2a59c7" stroke-width="1.2"/><circle cx="15" cy="14.8" r="1.7" fill="#fff" stroke="#2a59c7" stroke-width="1.2"/></g><circle cx="1728" cy="16" r="9.4" fill="#fbfbfb" stroke="#2e2e2e" stroke-width="1.5"/><text x="1723.3" y="22" font-size="16" font-weight="700" fill="#1f4fc0">?</text><path d="M1748 15 h7 l-3.5 3.4 z" fill="#cfcfcf"/><rect x="1836" y="20" width="11" height="3" fill="#fff"/><path d="M1869 13 V9.8 H1879.6 V18 H1876.5" fill="none" stroke="#fff" stroke-width="2"/><rect x="1865.5" y="13.8" width="10.5" height="8.4" fill="none" stroke="#fff" stroke-width="2"/><path d="M1897.6 10.6 L1910.4 23 M1910.4 10.6 L1897.6 23" stroke="#fff" stroke-width="2.4"/><rect x="894.5" y="46" width="16.5" height="9.5" rx="3" fill="#f6f6f6" stroke="#3a3a3a" stroke-width="1.3"/><path d="M899 52.8 h7.4 l-3.7 -3.8z" fill="#333"/><path d="M920 48.6 h6 l-3.0 3.2 z" fill="#f0f0f0"/><path d="M29.8 75.6 V95 L34.4 90.8 L37.8 99 L41 97.6 L37.6 89.8 L44 89.6 Z" fill="#fdfdfd" stroke="#4c4c4c" stroke-width="1.5" stroke-linejoin="round"/><g transform="translate(80,75)"><g opacity="1"><path d="M1 12.5 L7.5 1 H37 V12 L28 26 H1 Z" fill="#fbfbfb" stroke="#595959" stroke-width="1.7" stroke-linejoin="round"/><path d="M28 26 V12.5 L37 1" fill="none" stroke="#595959" stroke-width="1.2"/><path d="M28.6 13 L36.4 2.6 V11.8 L28.6 24.6 Z" fill="#c9d3dd"/><rect x="1" y="12.5" width="27" height="13.5" rx="1" fill="#f1f1f1" stroke="#595959" stroke-width="1.7"/><rect x="4" y="15.2" width="21" height="8" fill="url(#gd)" stroke="#8a8a8a" stroke-width=".9"/><path d="M4 15.2 L10.5 15.2 L10.5 19.5 H25 M10.5 19.5 L4 23.2" fill="none" stroke="#7a7a7a" stroke-width="1"/><rect x="4" y="15.2" width="4.5" height="8" fill="#5b6b8f" opacity=".55"/></g></g><g transform="translate(147,71.5)"><g opacity=".42"><g opacity="1"><path d="M1 12.5 L7.5 1 H37 V12 L28 26 H1 Z" fill="#fbfbfb" stroke="#595959" stroke-width="1.7" stroke-linejoin="round"/><path d="M28 26 V12.5 L37 1" fill="none" stroke="#595959" stroke-width="1.2"/><path d="M28.6 13 L36.4 2.6 V11.8 L28.6 24.6 Z" fill="#c9d3dd"/><rect x="1" y="12.5" width="27" height="13.5" rx="1" fill="#f1f1f1" stroke="#595959" stroke-width="1.7"/><rect x="4" y="15.2" width="21" height="8" fill="url(#gd)" stroke="#8a8a8a" stroke-width=".9"/><path d="M4 15.2 L10.5 15.2 L10.5 19.5 H25 M10.5 19.5 L4 23.2" fill="none" stroke="#7a7a7a" stroke-width="1"/><rect x="4" y="15.2" width="4.5" height="8" fill="#5b6b8f" opacity=".55"/></g></g><path d="M13.5 18.5 L25.5 7.5" stroke="#5aa9f2" stroke-width="1.8"/></g><g transform="translate(214,72.5)"><path d="M.8 5 Q.8 1 10 1 Q19.2 1 19.2 5 V10.5 Q17.5 14 13 14.4 L11.5 11.5 H8.5 L7 14.4 Q2.5 14 .8 10.5 Z" fill="#8e8e8e" stroke="#3e3e3e" stroke-width="1.3"/><ellipse cx="10" cy="5" rx="8.4" ry="3.4" fill="#fafafa" stroke="#4a4a4a" stroke-width="1"/></g><g transform="translate(216,101.5)"><path d="M5 2 L16 6 V18.5 L5 13.5 Z" fill="#e4e4e4" stroke="#4a4a4a" stroke-width="1.3"/><path d="M5 5.8 L16 10 M5 9.6 L16 14.2" stroke="#4a4a4a" stroke-width="1.1"/><path d="M5 2 L8 .6 M1 5 V9 L5 10.5" fill="none" stroke="#4a4a4a" stroke-width="1.2"/></g><g transform="translate(214,132)"><rect x="0" y="1" width="7.5" height="18" fill="url(#gh)"/><path d="M0 1.4 H7 M0 18.6 H7" stroke="#3e3e3e" stroke-width="1.6"/><path d="M8 2 Q11 .5 13 3 Q15 .5 18 2 Q20 10 18 18 Q15 19.5 13 17 Q11 19.5 8 18 Q6 10 8 2 Z" fill="#d7ebfb" stroke="#2f83d6" stroke-width="1.3"/><path d="M13 3 Q11 10 13 17" fill="none" stroke="#2f83d6" stroke-width="1.2"/></g><g transform="translate(260,69)"><path d="M1 6 L5 .8 L11.5 6.5 L17 .8 L23 6.5 L29 .8 L33.5 6 V30 L29 35.2 L23 29.5 L17 35.2 L11.5 29.5 L5 35.2 L1 30 Z" fill="#9c9c9c" stroke="#595959" stroke-width="1.4" stroke-linejoin="round"/><path d="M2 6.3 L5 2.4 L11.5 8 V28 L5 33.6 L2 29.7 Z" fill="url(#gf)"/><path d="M11.5 8 L17 2.4 L23 8 V28 L17 33.6 L11.5 28 Z" fill="url(#gf)"/><path d="M23 8 L29 2.4 L32.5 6.3 V29.7 L29 33.6 L23 28 Z" fill="url(#gf)"/></g><g transform="translate(315,69)"><rect x=".8" y=".8" width="35" height="34.6" rx="1.5" fill="#9b9b9b" stroke="#595959" stroke-width="1.6"/><rect x="3.6" y="3.6" width="29.4" height="29" fill="url(#ga)" stroke="#5f5f5f" stroke-width="1.2"/><rect x="7.3" y="7.3" width="22" height="21.6" fill="#8c8c8c" stroke="#5f5f5f" stroke-width="1.1"/><rect x="9.6" y="9.6" width="17.4" height="17" fill="url(#ga)" stroke="#5f5f5f" stroke-width="1.1"/><rect x="12.6" y="12.6" width="11.4" height="11" fill="#8c8c8c" stroke="#5f5f5f" stroke-width="1"/><rect x="14.8" y="14.8" width="7" height="6.6" fill="url(#ga)" stroke="#5f5f5f" stroke-width="1"/><path d="M.8 .8 L14.8 14.8 M35.8 .8 L21.8 14.8 M.8 35.4 L14.8 21.4 M35.8 35.4 L21.8 21.4" stroke="#6f6f6f" stroke-width=".9"/></g><g transform="translate(393,69)"><g opacity="1"><rect x="9.5" y=".8" width="4.4" height="16" fill="url(#gh)" stroke="#595959" stroke-width="1.2"/><path d="M5 11 H9.5 V24 H5 Z" fill="#777" stroke="#595959" stroke-width="1.1"/><rect x=".8" y="23.5" width="37" height="11" rx="1" fill="url(#gv)" stroke="#595959" stroke-width="1.3"/><path d="M27.5 23.5 V34.5 M32.5 23.5 V34.5" stroke="#595959" stroke-width="1.3"/><path d="M9.5 15.5 H17 V36 H11 V24 Z" fill="url(#gh)" stroke="#595959" stroke-width="1.3" stroke-linejoin="round"/></g></g><g transform="translate(473,69)"><g opacity=".55"><path d="M30 0 V11 Q30 15 26 17.5 L14 24 H8 Q3 24 3 29 V36" fill="none" stroke="#c8c8c8" stroke-width="9" stroke-linejoin="round"/><path d="M30 0 V11 Q30 15 26 17.5 L14 24 H8 Q3 24 3 29 V36" fill="none" stroke="#f4f4f4" stroke-width="6" stroke-linejoin="round"/></g></g><g transform="translate(595,74.5)"><path d="M4 1.5 V20 H12" fill="none" stroke="#3e3e3e" stroke-width="1.5"/><path d="M.5 5 H7.5 M.5 9.5 H7.5 M1.5 5 L6.5 9.5 M6.5 5 L1.5 9.5" stroke="#3e3e3e" stroke-width="1.2"/><path d="M11 18 L14 20 L11 22 Z" fill="#3e3e3e"/><path d="M27.5 3.5 L38 9 V22 L27.5 28 L17 22 V9 Z" fill="#f4f4f4" stroke="#595959" stroke-width="1.4" stroke-linejoin="round"/><path d="M17 9 L27.5 14.5 L38 9 M27.5 14.5 V28" fill="none" stroke="#595959" stroke-width="1.2"/><path d="M19.5 13.5 L25 16.5 V24 L19.5 21 Z M30 16.5 L35.5 13.5 V21 L30 24 Z" fill="#dcdcdc" stroke="#8a8a8a" stroke-width=".8"/></g><g transform="translate(727.5,71.5)"><path d="M2 6 L7 1 H35.5 V29 L31 34.6 H2 Z" fill="#e6e6e6" stroke="#595959" stroke-width="1.4" stroke-linejoin="round"/><rect x="2" y="6" width="29" height="28.6" fill="#f4f4f4" stroke="#595959" stroke-width="1.3"/><circle cx="16.5" cy="20.3" r="12" fill="#d9d9d9" stroke="#6a6a6a" stroke-width="1.3"/><g fill="#8d8d8d" stroke="#666" stroke-width=".6"><path d="M16.5 20.3 L14 9 Q20 8 23 11 Z"/><path d="M16.5 20.3 L27.5 17 Q28.5 23 26 26 Z"/><path d="M16.5 20.3 L20 31.5 Q14 32.5 10.5 30 Z"/><path d="M16.5 20.3 L5.5 24 Q4.5 18 7 14.5 Z"/></g><circle cx="16.5" cy="20.3" r="2.6" fill="#fff" stroke="#666" stroke-width=".8"/></g><g transform="translate(804,70)"><g opacity="1" fill="none" stroke-linecap="round" stroke-linejoin="round"><path d="M8.5 5.8 L31.8 25.2 Q33.5 27 31 27 H6.2" stroke="#595959" stroke-width="11.6"/><path d="M8.5 5.8 L31.8 25.2 Q33.5 27 31 27 H6.2" stroke="#d3d3d3" stroke-width="8.8"/><path d="M8.2 4.2 L31.5 23.6 M6.2 25.2 H29" stroke="#fbfbfb" stroke-width="3.6"/><path d="M9 8.6 L27 23.6 M6.2 30 H31" stroke="#b3b3b3" stroke-width="1.6"/></g><g opacity="1"><ellipse cx="5.6" cy="27" rx="2.7" ry="4.3" fill="#f4f4f4" stroke="#8a8a8a" stroke-width="1"/></g></g><g transform="translate(871,70)"><g opacity="0.45" fill="none" stroke-linecap="round" stroke-linejoin="round"><path d="M8.5 5.8 L31.8 25.2 Q33.5 27 31 27 H6.2" stroke="#595959" stroke-width="11.6"/><path d="M8.5 5.8 L31.8 25.2 Q33.5 27 31 27 H6.2" stroke="#d3d3d3" stroke-width="8.8"/><path d="M8.2 4.2 L31.5 23.6 M6.2 25.2 H29" stroke="#fbfbfb" stroke-width="3.6"/><path d="M9 8.6 L27 23.6 M6.2 30 H31" stroke="#b3b3b3" stroke-width="1.6"/></g><g opacity="0.45"><ellipse cx="5.6" cy="27" rx="2.7" ry="4.3" fill="#f4f4f4" stroke="#8a8a8a" stroke-width="1"/></g><path d="M9 6.5 L32.5 26.6 H5.5" stroke="#3a97f0" stroke-width="1.5" fill="none"/></g><g transform="translate(942.5,72)"><path d="M5 1 H39.5 V13 H5 Q1 12.5 1 7 Q1 1.5 5 1 Z" fill="url(#gv)" stroke="#595959" stroke-width="1.4"/><ellipse cx="5" cy="7" rx="2.6" ry="4.5" fill="#f7f7f7" stroke="#8a8a8a" stroke-width=".9"/><path d="M5 18.5 H39.5 V30.5 H5 Q1 30 1 24.5 Q1 19 5 18.5 Z" fill="url(#gv)" stroke="#595959" stroke-width="1.4"/><ellipse cx="5" cy="24.5" rx="2.6" ry="4.5" fill="#f7f7f7" stroke="#8a8a8a" stroke-width=".9"/><rect x="39" y="0" width="2" height="32" fill="#eeeeee"/></g><g transform="translate(994.5,70)"><path d="M1 1 H9 Q17.5 1 17.5 10 V15 H20 V19 H8.5 V15 H10.5 V10.5 Q10.5 8 8 8 H1 Z" fill="url(#gv)" stroke="#595959" stroke-width="1.4" stroke-linejoin="round"/><path d="M3.5 1 V8" stroke="#595959" stroke-width="1.1"/></g><g transform="translate(994.5,102)"><path d="M4.5 1.2 H16 M10.2 1.2 V7" stroke="#3e3e3e" stroke-width="1.8"/><path d="M7 11 L10.2 6 L13.5 11" fill="#d9d9d9" stroke="#595959" stroke-width="1.2"/><path d="M.8 9.5 H4 V11.5 H16.5 V9.5 H19.7 V18.6 H16.5 V16.6 H4 V18.6 H.8 Z" fill="url(#gv)" stroke="#595959" stroke-width="1.3" stroke-linejoin="round"/></g><g transform="translate(995,132)"><path d="M1 4 Q1 .8 5 1.2 Q12 2.5 16 8 Q19.5 13 19 17.5 H11.5 Q12 13 9.5 10.5 Q7 8.5 2.5 8.5 Q.8 7 1 4 Z" fill="#cfcfcf" stroke="#595959" stroke-width="1.4" stroke-linejoin="round"/><path d="M5 1.5 L3.5 8.3 M9.5 3 L7 9 M13.5 6 L9.8 10.6 M16.8 10 L11.5 13.5" stroke="#777" stroke-width="1"/></g><g transform="translate(1051.5,68.5)"><rect x="1.5" y="1" width="10" height="17" rx="1.5" fill="url(#gh)" stroke="#595959" stroke-width="1.4"/><path d="M15 8.5 H32 Q34 8.5 34 10.2 V11.5 H15 Z" fill="#f4f4f4" stroke="#595959" stroke-width="1.2"/><path d="M6 17 Q6 12 13 12 H31 Q36 12 36 17 Q36 26 28 29.5 V33 H13 V29 Q6 25 6 17 Z" fill="url(#gv)" stroke="#595959" stroke-width="1.4" stroke-linejoin="round"/><path d="M10 34 H31 V37 H10 Z" fill="#e4e4e4" stroke="#595959" stroke-width="1.2"/><path d="M8 18.5 Q21 22.5 35 17.5" fill="none" stroke="#8a8a8a" stroke-width="1"/></g><g transform="translate(1118,68)"><path d="M.8 1 H37 V4 Q37 7 30 7.6 H8 Q.8 7 .8 4 Z" fill="url(#gv)" stroke="#595959" stroke-width="1.3"/><rect x="12" y="7.6" width="14" height="3" fill="#d0d0d0" stroke="#595959" stroke-width="1"/><path d="M14.5 10.6 V19 M19 10.6 V21 M23.5 10.6 V19 M16.8 10.6 V17 M21.2 10.6 V17" stroke="#555" stroke-width="1.4"/><path d="M11.5 21.5 Q19 17.5 26.5 21.5 L29.5 24.5 L24 23 L19 24.6 L14 23 L8.5 24.5 Z" fill="#d8d8d8" stroke="#595959" stroke-width="1.1"/><g fill="#3f9be8"><circle cx="4" cy="27" r="1"/><circle cx="8" cy="28.5" r="1"/><circle cx="12.5" cy="27.5" r="1"/><circle cx="17" cy="29" r="1"/><circle cx="21.5" cy="29" r="1"/><circle cx="26" cy="27.5" r="1"/><circle cx="30.5" cy="28.5" r="1"/><circle cx="34.5" cy="27" r="1"/><circle cx="6" cy="32" r="1"/><circle cx="11" cy="32.5" r="1"/><circle cx="15" cy="33.5" r="1"/><circle cx="19.2" cy="33" r="1"/><circle cx="23.5" cy="33.5" r="1"/><circle cx="28" cy="32.5" r="1"/><circle cx="32.5" cy="32" r="1"/><circle cx="13" cy="36.5" r="1"/><circle cx="19.2" cy="37" r="1"/><circle cx="25.5" cy="36.5" r="1"/></g></g><g transform="translate(1187.5,71.5)"><path d="M4 32 Q7 9 33 3.5" fill="none" stroke="#3a3a3a" stroke-width="1.7"/><circle cx="4" cy="32" r="3" fill="#2e2e2e"/><circle cx="33" cy="3.5" r="3" fill="#2e2e2e"/><path d="M10 11 L17 18 M13.5 8 L20.5 15" stroke="#2e2e2e" stroke-width="1.8"/></g><path d="M1202.5 138.3 h6.5 l-3.25 3.6 z" fill="#333"/><g transform="translate(1253.5,74.5)"><path d="M1 19.5 L19.5 1 V9.5 L1 28 Z" fill="#c9c9c9" stroke="#595959" stroke-width="1.3" stroke-linejoin="round"/><path d="M1 28 L19.5 9.5 H38 L19 28 Z" fill="#f6f6f6" stroke="#595959" stroke-width="1.2" stroke-linejoin="round"/><path d="M19 19.5 L38 1 V9.5 L19 28 Z" fill="#b9b9b9" stroke="#595959" stroke-width="1.3" stroke-linejoin="round"/><path d="M19 19.5 L16.5 21 V28 H19" fill="#e0e0e0" stroke="#595959" stroke-width="1"/></g><g transform="translate(1307.5,76.5)"><rect x=".8" y=".8" width="36.9" height="22.9" rx="7" fill="url(#gv)" stroke="#595959" stroke-width="1.4"/><ellipse cx="5.0" cy="12.25" rx="1.6" ry="10.05" fill="none" stroke="#707070" stroke-width="1.1"/><ellipse cx="9.2" cy="12.25" rx="1.6" ry="10.05" fill="none" stroke="#707070" stroke-width="1.1"/><ellipse cx="13.4" cy="12.25" rx="1.6" ry="10.05" fill="none" stroke="#707070" stroke-width="1.1"/><ellipse cx="17.6" cy="12.25" rx="1.6" ry="10.05" fill="none" stroke="#707070" stroke-width="1.1"/><ellipse cx="21.8" cy="12.25" rx="1.6" ry="10.05" fill="none" stroke="#707070" stroke-width="1.1"/><ellipse cx="26.0" cy="12.25" rx="1.6" ry="10.05" fill="none" stroke="#707070" stroke-width="1.1"/><ellipse cx="30.2" cy="12.25" rx="1.6" ry="10.05" fill="none" stroke="#707070" stroke-width="1.1"/></g><g transform="translate(1370.5,73.5)"><rect x=".8" y=".8" width="36.9" height="11.9" rx="5.95" fill="url(#gv)" stroke="#595959" stroke-width="1.4"/><ellipse cx="5.0" cy="6.75" rx="1.6" ry="4.55" fill="none" stroke="#707070" stroke-width="1.1"/><ellipse cx="9.2" cy="6.75" rx="1.6" ry="4.55" fill="none" stroke="#707070" stroke-width="1.1"/><ellipse cx="13.4" cy="6.75" rx="1.6" ry="4.55" fill="none" stroke="#707070" stroke-width="1.1"/><ellipse cx="17.6" cy="6.75" rx="1.6" ry="4.55" fill="none" stroke="#707070" stroke-width="1.1"/><ellipse cx="21.8" cy="6.75" rx="1.6" ry="4.55" fill="none" stroke="#707070" stroke-width="1.1"/><ellipse cx="26.0" cy="6.75" rx="1.6" ry="4.55" fill="none" stroke="#707070" stroke-width="1.1"/><ellipse cx="30.2" cy="6.75" rx="1.6" ry="4.55" fill="none" stroke="#707070" stroke-width="1.1"/></g><g transform="translate(1370.5,91)"><rect x=".8" y=".8" width="36.9" height="11.9" rx="5.95" fill="url(#gv)" stroke="#595959" stroke-width="1.4"/><ellipse cx="5.0" cy="6.75" rx="1.6" ry="4.55" fill="none" stroke="#707070" stroke-width="1.1"/><ellipse cx="9.2" cy="6.75" rx="1.6" ry="4.55" fill="none" stroke="#707070" stroke-width="1.1"/><ellipse cx="13.4" cy="6.75" rx="1.6" ry="4.55" fill="none" stroke="#707070" stroke-width="1.1"/><ellipse cx="17.6" cy="6.75" rx="1.6" ry="4.55" fill="none" stroke="#707070" stroke-width="1.1"/><ellipse cx="21.8" cy="6.75" rx="1.6" ry="4.55" fill="none" stroke="#707070" stroke-width="1.1"/><ellipse cx="26.0" cy="6.75" rx="1.6" ry="4.55" fill="none" stroke="#707070" stroke-width="1.1"/><ellipse cx="30.2" cy="6.75" rx="1.6" ry="4.55" fill="none" stroke="#707070" stroke-width="1.1"/></g><g transform="translate(1427.5,74)"><path d="M1 7 Q1 1 10.5 1 Q20 1 20 7 V9.5 Q18.5 12.6 14.5 12.8 V9.5 Q10.5 8 6.5 9.5 V12.8 Q2.5 12.6 1 9.5 Z" fill="#bdbdbd" stroke="#595959" stroke-width="1.3"/><ellipse cx="10.5" cy="5.6" rx="7" ry="2.8" fill="#e9e9e9" stroke="#777" stroke-width=".9"/></g><g transform="translate(1427.5,102)"><path d="M1 4 Q1 1 4.5 1 H13 Q20 1 20 8.5 V16.5 Q20 20 16.5 20 Q13 20 13 16.5 V11.5 Q13 9 10.5 9 H4.5 Q1 9 1 5.5 Z" fill="#b4b4b4" stroke="#595959" stroke-width="1.3"/><path d="M4 1.2 V8.8 M7.5 1.2 V8.8 M11 1.5 V9 M13.2 12 H19.8 M13.2 15.5 H19.8 M14 5 L19 9.5" stroke="#6f6f6f" stroke-width="1"/></g><g transform="translate(1495.5,69.5)"><path d="M12.5 19 V1" stroke="#2e2e2e" stroke-width="1.8"/><path d="M11.5 19 L2.5 6.5" stroke="#2f8fe8" stroke-width="2.2"/><path d="M13.5 19 L22.5 7.5" stroke="#e07c16" stroke-width="2.2"/><rect x="1.5" y="17.5" width="22" height="19.5" rx="1" fill="url(#gl)" stroke="#595959" stroke-width="1.5"/><g fill="#7d7d7d"><rect x="5.5" y="21" width="5" height="4.6"/><rect x="14.5" y="21" width="5" height="4.6"/><rect x="5.5" y="29" width="5" height="4.6"/><rect x="14.5" y="29" width="5" height="4.6"/></g></g><g transform="translate(1570,71.5)"><rect x=".8" y=".8" width="25.5" height="33.8" rx="1.2" fill="url(#gl)" stroke="#595959" stroke-width="1.5"/><circle cx="13.5" cy="17.3" r="8.6" fill="#f7f7f7" stroke="#777" stroke-width="1.5"/><path d="M10.8 13.5 V21 M16.2 13.5 V21" stroke="#777" stroke-width="2"/></g><path d="M1580.5 138.3 h6.5 l-3.25 3.6 z" fill="#333"/><g transform="translate(1630,68.5)"><path d="M16 1 V13 M34 11 V23" stroke="#555" stroke-width="1.3"/><path d="M2 12.5 L16.5 8.5 L41 26 V32 L33.5 36.5 L2 16.5 Z" fill="#d4d4d4" stroke="#595959" stroke-width="1.4" stroke-linejoin="round"/><path d="M5 13.5 L16 10.8 L38.5 26.6 L33 30.5 Z" fill="#f9f9f9" stroke="#777" stroke-width="1"/><path d="M9 14.3 L33.5 29" stroke="#9a9a9a" stroke-width="2.4"/><path d="M33.5 36.5 V31 L41 26" fill="none" stroke="#595959" stroke-width="1.1"/></g><g transform="translate(1721.5,69.5)"><path d="M7.5 7 L13 1 H37 V28.5 L31 35 H1.5 V23.5 Z" fill="#e9e9e9" stroke="#595959" stroke-width="1.4" stroke-linejoin="round"/><path d="M7.5 7 H17.5 L23 1 M17.5 7 V18 H31 L37 12 M31 18 V35 M1.5 23.5 H7.5 V7 M7.5 23.5 L17.5 18" fill="none" stroke="#595959" stroke-width="1.2"/><path d="M8.3 7.8 H16.7 V17.6 L8.3 22.4 Z" fill="#d2d2d2"/><path d="M2.3 24.3 H30.2 V34.2 H2.3 Z" fill="#f7f7f7"/><path d="M18.3 8 L23.4 1.8 H36.2 V12 L31.4 17.2 H18.3Z" fill="#f7f7f7"/></g><path d="M1737.5 138.3 h6.5 l-3.25 3.6 z" fill="#333"/><g transform="translate(1808,71.5)"><path d="M1.5 12.5 L8 9.5 V31 L1.5 27.5 Z" fill="#dfeefb" stroke="#2f78c8" stroke-width="1.3"/><path d="M8 6.5 L33 1 V26.5 L8 33.5 Z" fill="#a8d0f4" stroke="#2f78c8" stroke-width="1.5" stroke-linejoin="round"/><path d="M16.3 4.7 V31.2 M24.6 2.9 V28.9 M8 15.5 L33 9.5 M8 24.5 L33 18" stroke="#2f78c8" stroke-width="1.5"/><path d="M12 13 L20 11 V21 L12 23.5 Z" fill="#d9d9d9" opacity=".75"/></g><g transform="translate(1854.5,70.5)"><path d="M1 4.5 L15.5 1 V15 L1 18.5 Z" fill="#f4f4f4" stroke="#3e3e3e" stroke-width="1.3"/><path d="M5.8 3.4 V17.3 M10.6 2.2 V16.2 M1 9.2 L15.5 5.7 M1 13.8 L15.5 10.3" stroke="#3e3e3e" stroke-width="1.1"/><circle cx="17.5" cy="10.5" r="3.8" fill="#ffcf6b" stroke="#e49a1a" stroke-width="1"/><rect x="16" y="14.3" width="3" height="3.4" fill="#9a9a9a"/></g><g transform="translate(1855,101.5)"><path d="M5.5 2.5 L19.5 1 L15 14 L1 16 Z" fill="#cfe6fa" stroke="#2f78c8" stroke-width="1.2" stroke-dasharray="3 1.4"/><path d="M8 18.5 L9 14 L18.5 5.5 L22 9 L12.5 17.5 Z" fill="#f1a53a" stroke="#8a5a1a" stroke-width=".9"/><path d="M8 18.5 L9 14 L12.5 17.5 Z" fill="#333"/></g><g transform="translate(1854.5,132)"><rect x=".8" y=".8" width="17" height="17.6" fill="#f4f4f4" stroke="#3e3e3e" stroke-width="1.4"/><rect x=".8" y=".8" width="17" height="3" fill="#3e3e3e"/><rect x="4" y="8" width="8" height="8" fill="#bfe0bf" stroke="#555" stroke-width=".9"/><path d="M13 1 V14 L16 11.5 L18 16 L20 15 L18 10.8 L21.5 10.6 Z" fill="#fdfdfd" stroke="#4a4a4a" stroke-width="1"/></g><path d="M57 169 h8 l-4.0 4 z" fill="#333"/><path d="M356.5 167.5 L361.7 172.7 M357.9 173 H362.1 V168.8" fill="none" stroke="#444" stroke-width="1.5"/><path d="M521.5 167.5 L526.7 172.7 M522.9 173 H527.1 V168.8" fill="none" stroke="#444" stroke-width="1.5"/><path d="M681.5 167.5 L686.7 172.7 M682.9 173 H687.1 V168.8" fill="none" stroke="#444" stroke-width="1.5"/><path d="M784.5 167.5 L789.7 172.7 M785.9 173 H790.1 V168.8" fill="none" stroke="#444" stroke-width="1.5"/><path d="M1161.5 167.5 L1166.7 172.7 M1162.9 173 H1167.1 V168.8" fill="none" stroke="#444" stroke-width="1.5"/><path d="M1672 167.5 L1677.2 172.7 M1673.4 173 H1677.6 V168.8" fill="none" stroke="#444" stroke-width="1.5"/><path d="M580.8 223.9 L591.3 235.2 M591.3 223.9 L580.8 235.2" stroke="#2a2a2a" stroke-width="2.2"/><path d="M1904.2 223.9 L1914.7 235.2 M1914.7 223.9 L1904.2 235.2" stroke="#2a2a2a" stroke-width="2.2"/><path d="M12.5 261 V914" stroke="#9a9a9a" stroke-width="1" stroke-dasharray="1 1" shape-rendering="crispEdges"/><path d="M38.5 262 V270" stroke="#9a9a9a" stroke-width="1" stroke-dasharray="1 1" shape-rendering="crispEdges"/><path d="M38.5 283 V292" stroke="#9a9a9a" stroke-width="1" stroke-dasharray="1 1" shape-rendering="crispEdges"/><path d="M64.5 305 V314" stroke="#9a9a9a" stroke-width="1" stroke-dasharray="1 1" shape-rendering="crispEdges"/><path d="M90.5 327 V336" stroke="#9a9a9a" stroke-width="1" stroke-dasharray="1 1" shape-rendering="crispEdges"/><path d="M116.5 349 V380" stroke="#9a9a9a" stroke-width="1" stroke-dasharray="1 1" shape-rendering="crispEdges"/><path d="M142.5 393 V804" stroke="#9a9a9a" stroke-width="1" stroke-dasharray="1 1" shape-rendering="crispEdges"/><rect x="6.5" y="248.5" width="12" height="12" rx="1.5" fill="#f1f1f1" stroke="#9d9d9d" stroke-width="1"/><path d="M9 254.5 H16" stroke="#2d5c9e" stroke-width="1.1" shape-rendering="crispEdges"/><path d="M19 254.5 H28" stroke="#9a9a9a" stroke-width="1" stroke-dasharray="1 1" shape-rendering="crispEdges"/><rect x="32.5" y="270.5" width="12" height="12" rx="1.5" fill="#f1f1f1" stroke="#9d9d9d" stroke-width="1"/><path d="M35 276.5 H42 M38.5 273 V280" stroke="#2d5c9e" stroke-width="1.1" shape-rendering="crispEdges"/><path d="M45 276.5 H57" stroke="#9a9a9a" stroke-width="1" stroke-dasharray="1 1" shape-rendering="crispEdges"/><rect x="32.5" y="292.5" width="12" height="12" rx="1.5" fill="#f1f1f1" stroke="#9d9d9d" stroke-width="1"/><path d="M35 298.5 H42" stroke="#2d5c9e" stroke-width="1.1" shape-rendering="crispEdges"/><path d="M45 298.5 H57" stroke="#9a9a9a" stroke-width="1" stroke-dasharray="1 1" shape-rendering="crispEdges"/><rect x="58.5" y="314.5" width="12" height="12" rx="1.5" fill="#f1f1f1" stroke="#9d9d9d" stroke-width="1"/><path d="M61 320.5 H68" stroke="#2d5c9e" stroke-width="1.1" shape-rendering="crispEdges"/><path d="M71 320.5 H83" stroke="#9a9a9a" stroke-width="1" stroke-dasharray="1 1" shape-rendering="crispEdges"/><rect x="84.5" y="336.5" width="12" height="12" rx="1.5" fill="#f1f1f1" stroke="#9d9d9d" stroke-width="1"/><path d="M87 342.5 H94" stroke="#2d5c9e" stroke-width="1.1" shape-rendering="crispEdges"/><path d="M97 342.5 H109" stroke="#9a9a9a" stroke-width="1" stroke-dasharray="1 1" shape-rendering="crispEdges"/><path d="M117 364.5 H135" stroke="#9a9a9a" stroke-width="1" stroke-dasharray="1 1" shape-rendering="crispEdges"/><rect x="110.5" y="380.5" width="12" height="12" rx="1.5" fill="#f1f1f1" stroke="#9d9d9d" stroke-width="1"/><path d="M113 386.5 H120" stroke="#2d5c9e" stroke-width="1.1" shape-rendering="crispEdges"/><path d="M123 386.5 H135" stroke="#9a9a9a" stroke-width="1" stroke-dasharray="1 1" shape-rendering="crispEdges"/><path d="M143 408.5 H160" stroke="#9a9a9a" stroke-width="1" stroke-dasharray="1 1" shape-rendering="crispEdges"/><path d="M143 430.5 H160" stroke="#9a9a9a" stroke-width="1" stroke-dasharray="1 1" shape-rendering="crispEdges"/><path d="M143 452.5 H160" stroke="#9a9a9a" stroke-width="1" stroke-dasharray="1 1" shape-rendering="crispEdges"/><path d="M143 474.5 H160" stroke="#9a9a9a" stroke-width="1" stroke-dasharray="1 1" shape-rendering="crispEdges"/><path d="M143 496.5 H160" stroke="#9a9a9a" stroke-width="1" stroke-dasharray="1 1" shape-rendering="crispEdges"/><path d="M143 518.5 H160" stroke="#9a9a9a" stroke-width="1" stroke-dasharray="1 1" shape-rendering="crispEdges"/><path d="M143 540.5 H160" stroke="#9a9a9a" stroke-width="1" stroke-dasharray="1 1" shape-rendering="crispEdges"/><path d="M143 562.5 H160" stroke="#9a9a9a" stroke-width="1" stroke-dasharray="1 1" shape-rendering="crispEdges"/><path d="M143 584.5 H160" stroke="#9a9a9a" stroke-width="1" stroke-dasharray="1 1" shape-rendering="crispEdges"/><path d="M143 606.5 H160" stroke="#9a9a9a" stroke-width="1" stroke-dasharray="1 1" shape-rendering="crispEdges"/><path d="M143 628.5 H160" stroke="#9a9a9a" stroke-width="1" stroke-dasharray="1 1" shape-rendering="crispEdges"/><path d="M143 650.5 H160" stroke="#9a9a9a" stroke-width="1" stroke-dasharray="1 1" shape-rendering="crispEdges"/><path d="M143 672.5 H160" stroke="#9a9a9a" stroke-width="1" stroke-dasharray="1 1" shape-rendering="crispEdges"/><path d="M143 694.5 H160" stroke="#9a9a9a" stroke-width="1" stroke-dasharray="1 1" shape-rendering="crispEdges"/><path d="M143 716.5 H160" stroke="#9a9a9a" stroke-width="1" stroke-dasharray="1 1" shape-rendering="crispEdges"/><path d="M143 738.5 H160" stroke="#9a9a9a" stroke-width="1" stroke-dasharray="1 1" shape-rendering="crispEdges"/><path d="M143 760.5 H160" stroke="#9a9a9a" stroke-width="1" stroke-dasharray="1 1" shape-rendering="crispEdges"/><path d="M143 782.5 H160" stroke="#9a9a9a" stroke-width="1" stroke-dasharray="1 1" shape-rendering="crispEdges"/><path d="M143 804.5 H160" stroke="#9a9a9a" stroke-width="1" stroke-dasharray="1 1" shape-rendering="crispEdges"/><path d="M13 826.5 H27" stroke="#9a9a9a" stroke-width="1" stroke-dasharray="1 1" shape-rendering="crispEdges"/><rect x="6.5" y="842.5" width="12" height="12" rx="1.5" fill="#f1f1f1" stroke="#9d9d9d" stroke-width="1"/><path d="M9 848.5 H16 M12.5 845 V852" stroke="#2d5c9e" stroke-width="1.1" shape-rendering="crispEdges"/><path d="M19 848.5 H27" stroke="#9a9a9a" stroke-width="1" stroke-dasharray="1 1" shape-rendering="crispEdges"/><rect x="6.5" y="864.5" width="12" height="12" rx="1.5" fill="#f1f1f1" stroke="#9d9d9d" stroke-width="1"/><path d="M9 870.5 H16 M12.5 867 V874" stroke="#2d5c9e" stroke-width="1.1" shape-rendering="crispEdges"/><path d="M19 870.5 H27" stroke="#9a9a9a" stroke-width="1" stroke-dasharray="1 1" shape-rendering="crispEdges"/><rect x="6.5" y="886.5" width="12" height="12" rx="1.5" fill="#f1f1f1" stroke="#9d9d9d" stroke-width="1"/><path d="M9 892.5 H16 M12.5 889 V896" stroke="#2d5c9e" stroke-width="1.1" shape-rendering="crispEdges"/><path d="M19 892.5 H27" stroke="#9a9a9a" stroke-width="1" stroke-dasharray="1 1" shape-rendering="crispEdges"/><rect x="6.5" y="908.5" width="12" height="12" rx="1.5" fill="#f1f1f1" stroke="#9d9d9d" stroke-width="1"/><path d="M9 914.5 H16 M12.5 911 V918" stroke="#2d5c9e" stroke-width="1.1" shape-rendering="crispEdges"/><path d="M19 914.5 H27" stroke="#9a9a9a" stroke-width="1" stroke-dasharray="1 1" shape-rendering="crispEdges"/><rect x="6.5" y="930.5" width="12" height="12" rx="1.5" fill="#f1f1f1" stroke="#9d9d9d" stroke-width="1"/><path d="M9 936.5 H16 M12.5 933 V940" stroke="#2d5c9e" stroke-width="1.1" shape-rendering="crispEdges"/><path d="M19 936.5 H27" stroke="#9a9a9a" stroke-width="1" stroke-dasharray="1 1" shape-rendering="crispEdges"/><g transform="translate(28.5,244)"><path d="M.8 5 V.8 H5 M13.5 .8 H18 V5 M18 13 V17.5 H13.5 M5 17.5 H.8 V13" fill="none" stroke="#444" stroke-width="1.5"/><rect x="4.5" y="5" width="9.5" height="8.5" rx="2" fill="#e6eaee" stroke="#444" stroke-width="1.5" transform="skewX(-6) translate(1.2 0)"/></g><g transform="translate(28,816)"><rect x=".7" y=".7" width="17.6" height="17" fill="#f4f4f4" stroke="#555" stroke-width="1.3"/><rect x=".7" y=".7" width="17.6" height="3" fill="#666"/><g fill="#888"><rect x="3" y="6" width="5" height="3"/><rect x="3" y="11" width="5" height="4" rx="2"/><rect x="10" y="6" width="6" height="1.4"/><rect x="10" y="9" width="6" height="1.4"/><rect x="10" y="12" width="6" height="1.4"/></g></g><g transform="translate(28,838.5)"><rect x=".7" y=".7" width="17.6" height="15" fill="#fafafa" stroke="#555" stroke-width="1.3"/><rect x=".7" y=".7" width="17.6" height="3.4" fill="#666"/><path d="M.7 8 H18.3 M.7 12 H18.3 M6.5 4 V15.7 M12.5 4 V15.7" stroke="#999" stroke-width="1"/></g><g transform="translate(28,860)"><path d="M.8 .8 H13.5 L18.2 5.5 V18.2 H.8 Z" fill="#f4f4f4" stroke="#555" stroke-width="1.4"/><path d="M13.5 .8 V5.5 H18.2" fill="none" stroke="#555" stroke-width="1.1"/><path d="M3.5 15 V8.5 H11 V15 M6 15 V11.5 H8.5 V15 M13 15 V8 H15.5" fill="none" stroke="#777" stroke-width="1.2"/></g><g transform="translate(29,882)"><path d="M.8 .8 H7.5 V7.5 H.8 Z" fill="#eee" stroke="#444" stroke-width="1.5"/><path d="M10.5 .8 H16.5 V16.8 H.8 V10.8 H10.5 Z" fill="#eee" stroke="#444" stroke-width="1.5"/></g><g transform="translate(28.5,904)"><path d="M5 .8 H.8 V18 H5 M13.5 .8 H17.7 V18 H13.5" fill="none" stroke="#444" stroke-width="1.5"/><rect x="4" y="4" width="8" height="8" rx="2" fill="#e4e4e4" stroke="#555" stroke-width="1.3"/><circle cx="11" cy="11.5" r="4.2" fill="#cfcfcf" stroke="#555" stroke-width="1.3"/></g><g transform="translate(28,930.5)"><rect x=".8" y=".8" width="10.5" height="8" rx="4" fill="#f0a437" stroke="#a8690f" stroke-width="1.4"/><rect x="8.2" y=".8" width="10.5" height="8" rx="4" fill="#f0a437" stroke="#a8690f" stroke-width="1.4"/><path d="M4 4.8 H16" stroke="#7a4a06" stroke-width="1.6"/></g><g transform="translate(607,221)"><g opacity="0.75"><rect x=".7" y=".7" width="11.5" height="15" fill="#eef1f5" stroke="#707070" stroke-width="1.2"/><rect x="6.5" y="4.5" width="12.5" height="12.8" fill="#f3f5f8" stroke="#707070" stroke-width="1.2"/><path d="M6.5 8 H12 M12.2 4.5 V1.5" stroke="#707070" stroke-width="1" stroke-dasharray="1.5 1"/></g></g><g transform="translate(917,221)"><g opacity="1"><rect x=".7" y=".7" width="11.5" height="15" fill="#eef1f5" stroke="#707070" stroke-width="1.2"/><rect x="6.5" y="4.5" width="12.5" height="12.8" fill="#f3f5f8" stroke="#707070" stroke-width="1.2"/><path d="M6.5 8 H12 M12.2 4.5 V1.5" stroke="#707070" stroke-width="1" stroke-dasharray="1.5 1"/></g></g><path d="M1200.8 223.9 L1211.3 235.2 M1211.3 223.9 L1200.8 235.2" stroke="#2a2a2a" stroke-width="2.2"/><rect x="1628" y="225.5" width="10" height="1.8" fill="#444"/><path d="M1628 229.5 h10 l-5.0 5 z" fill="#444"/><rect x="1587" y="247" width="32" height="114" rx="4" fill="#4b4b4b" stroke="#5c5c5c" stroke-width="1"/><path d="M1611 250.5 l3.6 3.6 m0 -3.6 l-3.6 3.6" stroke="#e6e6e6" stroke-width="1.1"/><path d="M1592 277 Q1592 268.5 1601 268.5 H1608.5 V277 Q1608.500 285 1600 285 Q1592 285 1592 277 Z" fill="#a7a7a7"/><circle cx="1600" cy="276" r="4.4" fill="#bdbdbd" stroke="#3f3f3f" stroke-width="1.2"/><path d="M1597 279.5 L1594 283.5" stroke="#3f3f3f" stroke-width="1.4"/><text x="1603.500" y="289" font-size="7" fill="#1f3f9a" font-weight="700">2D</text><path d="M1589.500 303.5 H1616.500" stroke="#3a3a3a" stroke-width="1"/><path d="M1600.5 296.500 l2 1.8 l2 -1.8 M1600.5 338 l2 1.800 l2 -1.800" fill="none" stroke="#3f4656" stroke-width="1"/><rect x="1595.500" y="313" width="9.5" height="9.5" fill="#7c7c7c"/><circle cx="1605.500" cy="322.500" r="2.800" fill="#a9a9a9"/><rect x="1610" y="353" width="5" height="1.3" fill="#dcdcdc"/><path d="M1610 355.300 h5 l-2.5 2.600 z" fill="#dcdcdc"/><g fill="#b9bcc0"><rect x="1636" y="972" width="3" height="3"/><rect x="1632" y="976" width="3" height="3"/><rect x="1636" y="976" width="3" height="3"/><rect x="1628" y="980" width="3" height="3"/><rect x="1632" y="980" width="3" height="3"/><rect x="1636" y="980" width="3" height="3"/></g><g transform="translate(1674,266)"><rect x="1" y="1" width="23" height="34" rx="1" fill="url(#gl)" stroke="#595959" stroke-width="1.7"/><path d="M24 4 H36 V18" fill="#eceff3" stroke="#595959" stroke-width="1.5"/><path d="M24 4 V16 H36" fill="none" stroke="#595959" stroke-width="1.2" stroke-dasharray="2 1.4"/><rect x="15.500" y="16" width="22" height="22" rx="1" fill="url(#gl)" stroke="#595959" stroke-width="1.7"/><path d="M15.5 16 V37 M15.5 16 H24" stroke="#f4f4f4" stroke-width="1.9"/><path d="M15.5 16 V37 M15.5 16 H24" stroke="#595959" stroke-width="1.300" stroke-dasharray="2 1.400"/></g><path d="M1907 284.5 h11 l-5.5 5.5 z" fill="#333"/><path d="M1808 343.2 l4.400 4.400 l4.400 -4.400" fill="none" stroke="#555" stroke-width="1.2"/><g transform="translate(1829,335)"><rect x=".7" y=".7" width="5.600" height="5.600" fill="#fff" stroke="#444" stroke-width="1.100"/><rect x="8.500" y=".7" width="6" height="5.600" fill="#fff" stroke="#444" stroke-width="1.100"/><rect x=".7" y="8.500" width="5.600" height="5.600" fill="#fff" stroke="#444" stroke-width="1.100"/><rect x="8.700" y="6.500" width="7" height="9" rx="1" fill="#fff" stroke="#444" stroke-width="1.200"/><rect x="10.200" y="8.300" width="4" height="2" fill="#2f78c8"/><path d="M10.200 12.500 h4" stroke="#444" stroke-width="1"/></g><g transform="translate(695,966)"><pattern id="chk" width="3" height="3" patternUnits="userSpaceOnUse"><rect width="3" height="3" fill="#d6d6d6"/><rect width="1.5" height="1.5" fill="#8e8e8e"/><rect x="1.5" y="1.5" width="1.5" height="1.5" fill="#8e8e8e"/></pattern><rect x=".6" y=".6" width="18.500" height="14.4" fill="url(#chk)" stroke="#5a5a5a" stroke-width="1.200"/></g><g transform="translate(720,966.5)"><path d="M1 7 L5 1.500 H18.500 V10 L14.500 16 H1 Z" fill="url(#gb)" stroke="#2f78c8" stroke-width="1.300" stroke-linejoin="round"/><path d="M1 7 H14.500 L18.500 1.500 M14.500 7 V16" fill="none" stroke="#2f78c8" stroke-width="1.100"/></g><g transform="translate(744,965)"><circle cx="8" cy="8" r="4.600" fill="#ffd36e" stroke="#e08a12" stroke-width="1.200"/><path d="M8 .5 V2.500 M8 13.500 V15.500 M.5 8 H2.500 M13.500 8 H15.500 M2.700 2.700 L4.100 4.100 M13.300 2.700 L11.900 4.100 M2.700 13.300 L4.100 11.900" stroke="#e08a12" stroke-width="1.300"/><path d="M10.500 10.500 L17.500 17 M17.500 10.500 L10.500 17" stroke="#d0640c" stroke-width="2.200"/></g><g transform="translate(770,966.5)"><circle cx="7" cy="6.500" r="5.600" fill="#d6eafb" stroke="#2f78c8" stroke-width="1.400"/><path d="M2 15.500 H13" stroke="#555" stroke-width="1.600"/><path d="M9.500 9.500 L16.500 16 M16.500 9.500 L9.500 16" stroke="#d0640c" stroke-width="2.200"/></g><g transform="translate(793,968)"><path d="M6 5.500 V2.500 H17.500 V7.500 H14.500 M3.500 9 V5.500 H14.500 V11 H11.500 M1 14 V9 H11.500 V14 Z" fill="#f6f6f6" stroke="#9a9a9a" stroke-width="1.100"/></g><g transform="translate(818,966)"><rect x="1" y="4" width="10" height="10" fill="#bcd9f5" stroke="#2a63ad" stroke-width="1.300"/><path d="M4 4 V1.500 H13 M1 9 H-1.500" fill="none" stroke="#2a63ad" stroke-width="1.300"/><rect x="3" y="7" width="4" height="2.500" fill="#f0a030"/><path d="M13 3 Q17.500 1 18.500 6 Q18.800 9.500 16 11 V14.500 H12.500 V11 Q10 9 11 5.500 Z" fill="#e8f3fd" stroke="#2f78c8" stroke-width="1.200"/></g><g transform="translate(842,967)"><path d="M1 4 Q5 1 8.500 6.500 Q10.500 10 14 8.500 Q18 6 19.500 2" fill="none" stroke="#8a8a8a" stroke-width="1.300"/><ellipse cx="6.500" cy="10.500" rx="3.600" ry="2.800" fill="#d7ebfb" stroke="#777" stroke-width="1.100" transform="rotate(25 6.500 10.500)"/><ellipse cx="15" cy="9" rx="3.400" ry="2.600" fill="#eef6fd" stroke="#999" stroke-width="1" transform="rotate(-20 15 9)"/></g><g transform="translate(873.5,968.8) scale(0.78)"><path d="M5.500 1 Q10 1 10 5.500 Q10 8 8 10 V12.500 H3 V10 Q1 8 1 5.500 Q1 1 5.500 1 Z" fill="#e3f1fd" stroke="#3f8fe0" stroke-width="1.200"/><rect x="3.300" y="13" width="4.400" height="2.600" fill="#9a9a9a"/></g><g transform="translate(893.5,965.5)"><path d="M9 1 L15 4 V9 L9 12 L3 9 V4 Z" fill="#f1f1f1" stroke="#888" stroke-width="1.100"/><path d="M6 7 L11 9.500 V15 L6 17.500 L1 15 V9.500 Z" fill="#8cc3f5" stroke="#2f78c8" stroke-width="1.200"/><path d="M10.500 10.500 L17.500 17 M17.500 10.500 L10.500 17" stroke="#d0640c" stroke-width="2.200"/></g><g transform="translate(918,967)"><path d="M1 3 H18 V14.500 H1 Z" fill="#eee" stroke="#444" stroke-width="1.300" stroke-dasharray="3 1.500"/><path d="M4 3 V.8 H8 V3" fill="none" stroke="#444" stroke-width="1.200"/><rect x="10" y="7.500" width="9" height="8" fill="#f7f7f7" stroke="#444" stroke-width="1.200"/><rect x="12.800" y="10" width="3.400" height="3.200" fill="#333"/></g><g transform="translate(943,964.5)"><path d="M1 1 V17 M19.500 1 V10 M1 4 H19.500" fill="none" stroke="#555" stroke-width="1.200"/><path d="M1 12.500 H12" stroke="#777" stroke-width="1" stroke-dasharray="2.500 1.500"/><path d="M12 10 Q12 7.500 15.500 7.500 Q19 7.500 19 10 V12" fill="none" stroke="#777" stroke-width="1.200"/><rect x="11" y="11.500" width="9" height="6" fill="#8d8d8d"/></g><g transform="translate(690,993)"><rect x="5" y=".8" width="5" height="7" fill="#f4f4f4" stroke="#444" stroke-width="1.100"/><rect x="1" y="7.500" width="5.500" height="12" fill="#3f8fe0" stroke="#1d5aa3" stroke-width="1"/><rect x="7.500" y="5.500" width="5.500" height="14" fill="#dfeaf5" stroke="#1d5aa3" stroke-width="1"/><path d="M16 20 V10 M13.800 4.500 Q13.500 9 16 9.500 Q18.500 9 18.200 4.500" fill="none" stroke="#333" stroke-width="1.700"/></g><path d="M958.2 1002.3 l4.400 4.400 l4.400 -4.400" fill="none" stroke="#444" stroke-width="1.200"/><path d="M1337.8 1002.5 l4.600 4.600 l4.600 -4.600" fill="none" stroke="#b4b4b4" stroke-width="1.200"/><g transform="translate(979,994.5)"><rect x="6.500" y=".8" width="12" height="7.500" rx="2" fill="#f2f2f2" stroke="#444" stroke-width="1.300"/><path d="M9.500 8.300 L6 12" stroke="#444" stroke-width="1.300"/><circle cx="5" cy="13.500" r="2.400" fill="#f2f2f2" stroke="#444" stroke-width="1.200"/><path d="M.8 20 Q1.500 16 5 16 Q8.500 16 9.200 20" fill="none" stroke="#444" stroke-width="1.300"/></g><g transform="translate(1040,995)"><rect x=".8" y=".8" width="18.500" height="18.500" fill="#f7f7f7" stroke="#333" stroke-width="1.500"/><rect x=".8" y=".8" width="18.500" height="3" fill="#333"/><rect x="3.200" y="6" width="3.600" height="3" fill="#333"/><path d="M8.500 7.500 H17 M6 11.500 H17 M6 15.500 H17" stroke="#333" stroke-width="1.400"/><rect x="6" y="14" width="3" height="3" fill="#333"/></g><g transform="translate(1070,994)"><rect x="2.500" y="1" width="16.500" height="15" fill="#a9a9a9"/><path d="M1 14 H7 V11.500 L11.500 15.500 L7 19.500 V17 H1" fill="none" stroke="#dcdcdc" stroke-width="1.300"/></g><rect x="1633" y="998" width="9" height="4.500" rx="1.500" fill="#f0a437" stroke="#a8690f" stroke-width="1"/><path d="M1645 996 l6 5.500 m0 -5.500 l-6 5.500" stroke="#d87512" stroke-width="2"/><path d="M1641 1003 V1012 L1643.2 1010 L1644.8 1013.5 L1646.3 1012.8 L1644.8 1009.5 L1647.5 1009.3 Z" fill="#fff" stroke="#333" stroke-width=".9"/><path d="M1663 1010 L1672 998 V1010 Z M1662 1006 H1673" fill="#cfe3f7" stroke="#2a63ad" stroke-width="1.200"/><path d="M1674 996 l6 5.500 m0 -5.500 l-6 5.500" stroke="#d87512" stroke-width="2"/><path d="M1672 1003 V1012 L1674.2 1010 L1675.8 1013.5 L1677.3 1012.8 L1675.8 1009.5 L1678.5 1009.3 Z" fill="#fff" stroke="#333" stroke-width=".9"/><rect x="1693" y="996" width="10" height="3" fill="#f0a437" stroke="#a8690f" stroke-width=".8"/><rect x="1695" y="999" width="6" height="6" fill="#f7c57c" stroke="#a8690f" stroke-width=".8"/><rect x="1692" y="1005" width="12" height="2.500" fill="#f0a437" stroke="#a8690f" stroke-width=".8"/><path d="M1698 1007.500 V1013" stroke="#555" stroke-width="1.200"/><path d="M1703 1003 V1012 L1705.2 1010 L1706.8 1013.5 L1708.3 1012.8 L1706.8 1009.5 L1709.5 1009.3 Z" fill="#fff" stroke="#333" stroke-width=".9"/><path d="M1723 999 L1732 997 V1011 L1723 1013.500 Z" fill="#9fcaf3" stroke="#2a63ad" stroke-width="1.300"/><path d="M1734 996 l6 5.500 m0 -5.500 l-6 5.500" stroke="#d87512" stroke-width="2"/><path d="M1732 1003 V1012 L1734.2 1010 L1735.8 1013.5 L1737.3 1012.8 L1735.8 1009.5 L1738.5 1009.3 Z" fill="#fff" stroke="#333" stroke-width=".9"/><path d="M1759 996 V1008 M1753 1002 H1765 M1759 996 l-2 2.200 m2 -2.200 l2 2.200 M1753 1002 l2.200 -2 m-2.200 2 l2.200 2" fill="none" stroke="#333" stroke-width="1.200"/><path d="M1764.5 996 l6 5.500 m0 -5.500 l-6 5.500" stroke="#d87512" stroke-width="2"/><path d="M1763 1003.5 V1012.5 L1765.2 1010.5 L1766.8 1014.0 L1768.3 1013.3 L1766.8 1010.0 L1769.5 1009.8 Z" fill="#fff" stroke="#333" stroke-width=".9"/><circle cx="1792" cy="1004.500" r="6.200" fill="none" stroke="#b9b9b9" stroke-width="3.400" stroke-dasharray="3 1.600"/><path d="M1810.500 997 H1829.500 L1822.500 1005 V1013 H1817.500 V1005 Z" fill="#e9e9e9" stroke="#444" stroke-width="1.400" stroke-linejoin="round"/><clipPath id="cpc"><rect x="603" y="245" width="1018" height="719"/></clipPath><clipPath id="cpv"><rect x="600" y="955" width="1045" height="33"/></clipPath><g opacity=".38" clip-path="url(#cpc)"><text transform="translate(959 946.5) scale(1 .85)" text-anchor="middle" font-family="DejaVu Sans, sans-serif" font-weight="700" font-size="88" fill="#c1c1c1" stroke="#c1c1c1" stroke-width="3" stroke-linejoin="round" textLength="238" lengthAdjust="spacingAndGlyphs" direction="rtl">مستقل</text></g><g opacity=".38" clip-path="url(#cpv)"><text x="843.5" y="985.5" font-size="34" font-weight="700" fill="#c1c1c1" textLength="230" lengthAdjust="spacingAndGlyphs">mostaql.com</text></g></svg>
</body></html>
